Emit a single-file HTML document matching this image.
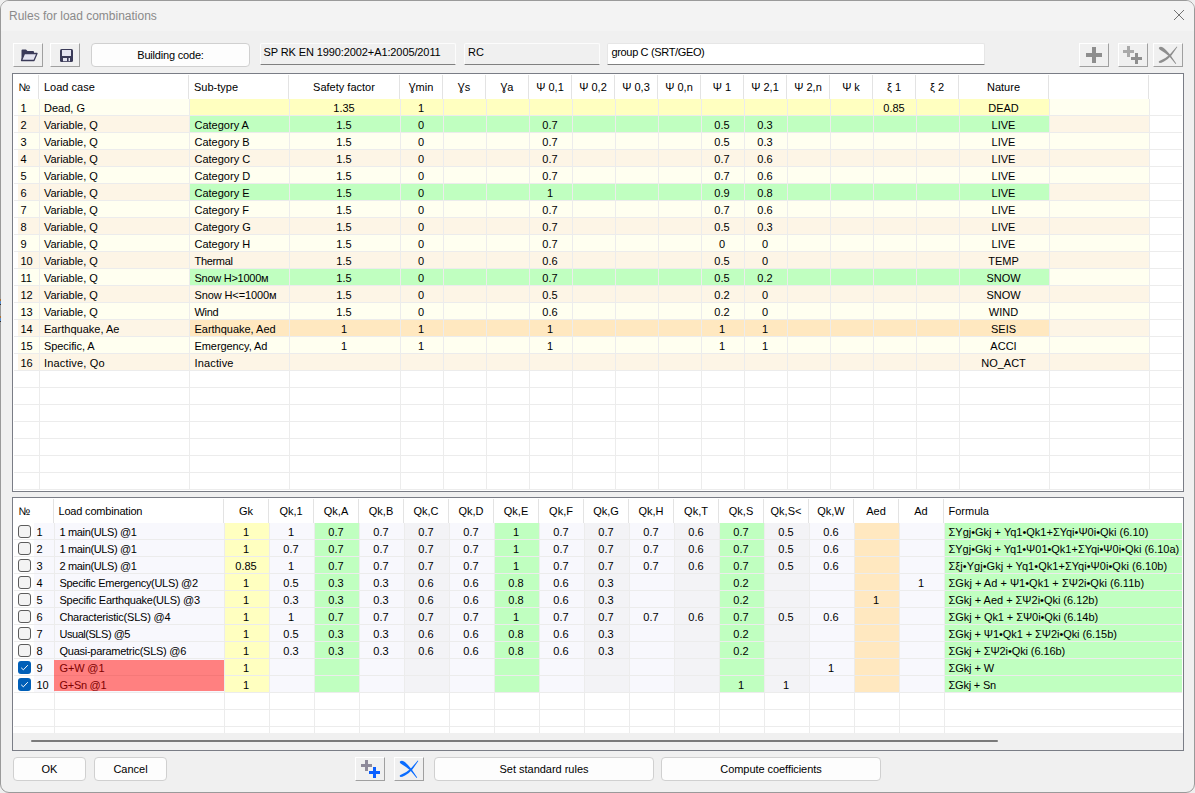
<!DOCTYPE html>
<html><head><meta charset="utf-8"><title>Rules for load combinations</title>
<style>
*{margin:0;padding:0}
html,body{width:1195px;height:793px;overflow:hidden;background:#efefef}
body{position:relative;font-family:"Liberation Sans",sans-serif;font-size:11px;color:#000}
.a{position:absolute}
.t{white-space:pre}
</style></head><body>
<div class="a" style="left:0px;top:0px;width:1195px;height:793px;background:#f0f0f0;border:1px solid #9a9a9a;border-radius:9px;box-sizing:border-box;overflow:hidden"></div>
<div class="a" style="left:1px;top:1px;width:1193px;height:30px;background:#f3f3f3;border-radius:8px 8px 0 0"></div>
<div class="a t" style="left:9px;top:10.24px;font-size:12px;line-height:12px;color:#8a8a8a;letter-spacing:-0.011px">Rules for load combinations</div>
<svg class="a" style="left:1172px;top:8px" width="14" height="14" viewBox="0 0 14 14"><path d="M2 2L12 12M12 2L2 12" stroke="#6a6a6a" stroke-width="0.95"/></svg>
<div class="a" style="left:0px;top:299px;width:1px;height:2px;background:#a8703a;"></div>
<div class="a" style="left:0px;top:301px;width:1px;height:3px;background:#5a8cc8;"></div>
<div class="a" style="left:0px;top:304px;width:1px;height:1px;background:#303030;"></div>
<div class="a" style="left:0px;top:316px;width:1px;height:2px;background:#a8703a;"></div>
<div class="a" style="left:0px;top:318px;width:1px;height:3px;background:#5a8cc8;"></div>
<div class="a" style="left:0px;top:321px;width:1px;height:1px;background:#303030;"></div>
<div class="a" style="left:13px;top:43px;width:30px;height:24px;background:#f0f0f0;border-top:1px solid #fff;border-left:1px solid #fff;border-right:1px solid #a0a0a0;border-bottom:1px solid #a0a0a0;box-sizing:border-box"></div>
<div class="a" style="left:50px;top:43px;width:30px;height:24px;background:#f0f0f0;border-top:1px solid #fff;border-left:1px solid #fff;border-right:1px solid #a0a0a0;border-bottom:1px solid #a0a0a0;box-sizing:border-box"></div>
<svg class="a" style="left:20px;top:48px" width="18" height="14" viewBox="0 0 18 14"><path d="M1.5 2.5 Q1.5 1.5 2.5 1.5 L6 1.5 L7.5 3 L13 3 Q14 3 14 4 L14 5.5 L4.5 5.5 L1.5 12.5 Z" fill="#3a3a58"/><path d="M4.5 5.5 L17 5.5 L14 12.5 L1.5 12.5 Z" fill="#e4e4f0" stroke="#3a3a58" stroke-width="1.3" stroke-linejoin="round"/></svg>
<svg class="a" style="left:60px;top:49px" width="13" height="13" viewBox="0 0 13 13"><rect x="0" y="0" width="13" height="13" rx="1.5" fill="#3a3a58"/><rect x="2" y="1" width="9" height="6" fill="#e4e4f0"/><rect x="3" y="9" width="7" height="3.2" fill="#e4e4f0"/><rect x="7" y="9" width="1.6" height="3.2" fill="#3a3a58"/></svg>
<div class="a" style="left:91px;top:43px;width:159px;height:24px;background:#fdfdfd;border:1px solid #d0d0d0;border-radius:4px;box-sizing:border-box"></div>
<div class="a t" style="left:91px;top:50.19px;font-size:11px;line-height:11px;width:159px;text-align:center;letter-spacing:-0.193px">Building code:</div>
<div class="a" style="left:260px;top:43px;width:196px;height:22px;background:#f0f0f0;border:1px solid #fcfcfc;border-bottom:1px solid #808080;border-radius:2px 2px 1px 1px;box-sizing:border-box"></div>
<div class="a t" style="left:263.5px;top:46.69px;font-size:11px;line-height:11px;letter-spacing:-0.104px">SP RK EN 1990:2002+A1:2005/2011</div>
<div class="a" style="left:464px;top:43px;width:136px;height:22px;background:#f0f0f0;border:1px solid #fcfcfc;border-bottom:1px solid #808080;border-radius:2px 2px 1px 1px;box-sizing:border-box"></div>
<div class="a t" style="left:468px;top:46.69px;font-size:11px;line-height:11px;">RC</div>
<div class="a" style="left:607px;top:43px;width:378px;height:22px;background:#ffffff;border:1px solid #e6e6e6;border-bottom:1px solid #808080;border-radius:2px 2px 1px 1px;box-sizing:border-box"></div>
<div class="a t" style="left:611.5px;top:46.69px;font-size:11px;line-height:11px;letter-spacing:-0.346px">group C (SRT/GEO)</div>
<div class="a" style="left:1079px;top:43px;width:30px;height:24px;background:#f0f0f0;border-top:1px solid #fff;border-left:1px solid #fff;border-right:1px solid #a0a0a0;border-bottom:1px solid #a0a0a0;box-sizing:border-box"></div>
<div class="a" style="left:1118px;top:43px;width:30px;height:24px;background:#f0f0f0;border-top:1px solid #fff;border-left:1px solid #fff;border-right:1px solid #a0a0a0;border-bottom:1px solid #a0a0a0;box-sizing:border-box"></div>
<div class="a" style="left:1153px;top:43px;width:30px;height:24px;background:#f0f0f0;border-top:1px solid #fff;border-left:1px solid #fff;border-right:1px solid #a0a0a0;border-bottom:1px solid #a0a0a0;box-sizing:border-box"></div>
<svg class="a" style="left:1079px;top:43px" width="30" height="24"><rect x="7" y="10" width="16" height="4" fill="#8e8e8e"/><rect x="13" y="4" width="4" height="16" fill="#8e8e8e"/></svg>
<svg class="a" style="left:1118px;top:43px" width="30" height="24"><rect x="5" y="7" width="11" height="3" fill="#a9a9a9"/><rect x="9" y="3" width="3" height="11" fill="#a9a9a9"/><rect x="13" y="14" width="11" height="3" fill="#8e8e8e"/><rect x="17" y="10" width="3" height="11" fill="#8e8e8e"/></svg>
<svg class="a" style="left:1153px;top:43px" width="30" height="24" viewBox="0 0 30 24"><path d="M6.2 4.2 Q8 3.4 10 4.4 Q13 6.5 17.6 12.2 L23.2 20.6 L22.6 21 L16.4 13.6 Q12 9.8 6.6 6.6 Q5.2 5.2 6.2 4.2 Z" fill="#8e8e8e"/><path d="M23.8 3.6 L24.3 4 L18.4 12.6 Q15.8 15.8 11 18.4 Q8 20 6.6 20 Q5.4 19.6 5.8 18.6 Q6.2 17.8 7.4 17.4 Q12.5 15.6 16.6 11.8 Z" fill="#8e8e8e"/></svg>
<div class="a" style="left:12px;top:73px;width:1172px;height:419px;border:1px solid #7a7d86;background:#fff;box-sizing:border-box"></div>
<div class="a" style="left:38px;top:75px;width:1px;height:24px;background:#e3e3e3;"></div>
<div class="a" style="left:188px;top:75px;width:1px;height:24px;background:#e3e3e3;"></div>
<div class="a" style="left:288px;top:75px;width:1px;height:24px;background:#e3e3e3;"></div>
<div class="a" style="left:399px;top:75px;width:1px;height:24px;background:#e3e3e3;"></div>
<div class="a" style="left:442px;top:75px;width:1px;height:24px;background:#e3e3e3;"></div>
<div class="a" style="left:485px;top:75px;width:1px;height:24px;background:#e3e3e3;"></div>
<div class="a" style="left:528px;top:75px;width:1px;height:24px;background:#e3e3e3;"></div>
<div class="a" style="left:571px;top:75px;width:1px;height:24px;background:#e3e3e3;"></div>
<div class="a" style="left:614px;top:75px;width:1px;height:24px;background:#e3e3e3;"></div>
<div class="a" style="left:657px;top:75px;width:1px;height:24px;background:#e3e3e3;"></div>
<div class="a" style="left:700px;top:75px;width:1px;height:24px;background:#e3e3e3;"></div>
<div class="a" style="left:743px;top:75px;width:1px;height:24px;background:#e3e3e3;"></div>
<div class="a" style="left:786px;top:75px;width:1px;height:24px;background:#e3e3e3;"></div>
<div class="a" style="left:829px;top:75px;width:1px;height:24px;background:#e3e3e3;"></div>
<div class="a" style="left:872px;top:75px;width:1px;height:24px;background:#e3e3e3;"></div>
<div class="a" style="left:915px;top:75px;width:1px;height:24px;background:#e3e3e3;"></div>
<div class="a" style="left:958px;top:75px;width:1px;height:24px;background:#e3e3e3;"></div>
<div class="a" style="left:1048px;top:75px;width:1px;height:24px;background:#e3e3e3;"></div>
<div class="a" style="left:1148px;top:75px;width:1px;height:24px;background:#e3e3e3;"></div>
<div class="a t" style="left:18.5px;top:81.69px;font-size:11px;line-height:11px;">№</div>
<div class="a t" style="left:44px;top:81.69px;font-size:11px;line-height:11px;">Load case</div>
<div class="a t" style="left:194px;top:81.69px;font-size:11px;line-height:11px;">Sub-type</div>
<div class="a t" style="left:289px;top:81.69px;font-size:11px;line-height:11px;width:110px;text-align:center;">Safety factor</div>
<div class="a t" style="left:400px;top:81.69px;font-size:11px;line-height:11px;width:42px;text-align:center;">Ɣmin</div>
<div class="a t" style="left:443px;top:81.69px;font-size:11px;line-height:11px;width:42px;text-align:center;">Ɣs</div>
<div class="a t" style="left:486px;top:81.69px;font-size:11px;line-height:11px;width:42px;text-align:center;">Ɣa</div>
<div class="a t" style="left:529px;top:81.69px;font-size:11px;line-height:11px;width:42px;text-align:center;">Ψ 0,1</div>
<div class="a t" style="left:572px;top:81.69px;font-size:11px;line-height:11px;width:42px;text-align:center;">Ψ 0,2</div>
<div class="a t" style="left:615px;top:81.69px;font-size:11px;line-height:11px;width:42px;text-align:center;">Ψ 0,3</div>
<div class="a t" style="left:658px;top:81.69px;font-size:11px;line-height:11px;width:42px;text-align:center;">Ψ 0,n</div>
<div class="a t" style="left:701px;top:81.69px;font-size:11px;line-height:11px;width:42px;text-align:center;">Ψ 1</div>
<div class="a t" style="left:744px;top:81.69px;font-size:11px;line-height:11px;width:42px;text-align:center;">Ψ 2,1</div>
<div class="a t" style="left:787px;top:81.69px;font-size:11px;line-height:11px;width:42px;text-align:center;">Ψ 2,n</div>
<div class="a t" style="left:830px;top:81.69px;font-size:11px;line-height:11px;width:42px;text-align:center;">Ψ k</div>
<div class="a t" style="left:873px;top:81.69px;font-size:11px;line-height:11px;width:42px;text-align:center;">ξ 1</div>
<div class="a t" style="left:916px;top:81.69px;font-size:11px;line-height:11px;width:42px;text-align:center;">ξ 2</div>
<div class="a t" style="left:959px;top:81.69px;font-size:11px;line-height:11px;width:89px;text-align:center;">Nature</div>
<div class="a t" style="left:1049px;top:81.69px;font-size:11px;line-height:11px;width:99px;text-align:center;"></div>
<div class="a" style="left:18px;top:99px;width:21px;height:16px;background:#fffff0;"></div>
<div class="a" style="left:40px;top:99px;width:149px;height:16px;background:#fffff0;"></div>
<div class="a" style="left:190px;top:99px;width:99px;height:16px;background:#ffffc0;"></div>
<div class="a" style="left:290px;top:99px;width:110px;height:16px;background:#ffffc0;"></div>
<div class="a" style="left:401px;top:99px;width:42px;height:16px;background:#ffffc0;"></div>
<div class="a" style="left:444px;top:99px;width:42px;height:16px;background:#ffffc0;"></div>
<div class="a" style="left:487px;top:99px;width:42px;height:16px;background:#ffffc0;"></div>
<div class="a" style="left:530px;top:99px;width:42px;height:16px;background:#ffffc0;"></div>
<div class="a" style="left:573px;top:99px;width:42px;height:16px;background:#ffffc0;"></div>
<div class="a" style="left:616px;top:99px;width:42px;height:16px;background:#ffffc0;"></div>
<div class="a" style="left:659px;top:99px;width:42px;height:16px;background:#ffffc0;"></div>
<div class="a" style="left:702px;top:99px;width:42px;height:16px;background:#ffffc0;"></div>
<div class="a" style="left:745px;top:99px;width:42px;height:16px;background:#ffffc0;"></div>
<div class="a" style="left:788px;top:99px;width:42px;height:16px;background:#ffffc0;"></div>
<div class="a" style="left:831px;top:99px;width:42px;height:16px;background:#ffffc0;"></div>
<div class="a" style="left:874px;top:99px;width:42px;height:16px;background:#ffffc0;"></div>
<div class="a" style="left:917px;top:99px;width:42px;height:16px;background:#ffffc0;"></div>
<div class="a" style="left:960px;top:99px;width:89px;height:16px;background:#ffffc0;"></div>
<div class="a" style="left:1050px;top:99px;width:99px;height:16px;background:#fffff0;"></div>
<div class="a t" style="left:20.5px;top:102.69px;font-size:11px;line-height:11px;">1</div>
<div class="a t" style="left:44px;top:102.69px;font-size:11px;line-height:11px;">Dead, G</div>
<div class="a t" style="left:289px;top:102.69px;font-size:11px;line-height:11px;width:110px;text-align:center;">1.35</div>
<div class="a t" style="left:400px;top:102.69px;font-size:11px;line-height:11px;width:42px;text-align:center;">1</div>
<div class="a t" style="left:873px;top:102.69px;font-size:11px;line-height:11px;width:42px;text-align:center;">0.85</div>
<div class="a t" style="left:959px;top:102.69px;font-size:11px;line-height:11px;width:89px;text-align:center;">DEAD</div>
<div class="a" style="left:18px;top:116px;width:21px;height:16px;background:#fdf5e6;"></div>
<div class="a" style="left:40px;top:116px;width:149px;height:16px;background:#fdf5e6;"></div>
<div class="a" style="left:190px;top:116px;width:99px;height:16px;background:#c0ffc0;"></div>
<div class="a" style="left:290px;top:116px;width:110px;height:16px;background:#c0ffc0;"></div>
<div class="a" style="left:401px;top:116px;width:42px;height:16px;background:#c0ffc0;"></div>
<div class="a" style="left:444px;top:116px;width:42px;height:16px;background:#c0ffc0;"></div>
<div class="a" style="left:487px;top:116px;width:42px;height:16px;background:#c0ffc0;"></div>
<div class="a" style="left:530px;top:116px;width:42px;height:16px;background:#c0ffc0;"></div>
<div class="a" style="left:573px;top:116px;width:42px;height:16px;background:#c0ffc0;"></div>
<div class="a" style="left:616px;top:116px;width:42px;height:16px;background:#c0ffc0;"></div>
<div class="a" style="left:659px;top:116px;width:42px;height:16px;background:#c0ffc0;"></div>
<div class="a" style="left:702px;top:116px;width:42px;height:16px;background:#c0ffc0;"></div>
<div class="a" style="left:745px;top:116px;width:42px;height:16px;background:#c0ffc0;"></div>
<div class="a" style="left:788px;top:116px;width:42px;height:16px;background:#c0ffc0;"></div>
<div class="a" style="left:831px;top:116px;width:42px;height:16px;background:#c0ffc0;"></div>
<div class="a" style="left:874px;top:116px;width:42px;height:16px;background:#c0ffc0;"></div>
<div class="a" style="left:917px;top:116px;width:42px;height:16px;background:#c0ffc0;"></div>
<div class="a" style="left:960px;top:116px;width:89px;height:16px;background:#c0ffc0;"></div>
<div class="a" style="left:1050px;top:116px;width:99px;height:16px;background:#fdf5e6;"></div>
<div class="a t" style="left:20.5px;top:119.69px;font-size:11px;line-height:11px;">2</div>
<div class="a t" style="left:44px;top:119.69px;font-size:11px;line-height:11px;letter-spacing:-0.052px">Variable, Q</div>
<div class="a t" style="left:194.5px;top:119.69px;font-size:11px;line-height:11px;">Category A</div>
<div class="a t" style="left:289px;top:119.69px;font-size:11px;line-height:11px;width:110px;text-align:center;">1.5</div>
<div class="a t" style="left:400px;top:119.69px;font-size:11px;line-height:11px;width:42px;text-align:center;">0</div>
<div class="a t" style="left:529px;top:119.69px;font-size:11px;line-height:11px;width:42px;text-align:center;">0.7</div>
<div class="a t" style="left:701px;top:119.69px;font-size:11px;line-height:11px;width:42px;text-align:center;">0.5</div>
<div class="a t" style="left:744px;top:119.69px;font-size:11px;line-height:11px;width:42px;text-align:center;">0.3</div>
<div class="a t" style="left:959px;top:119.69px;font-size:11px;line-height:11px;width:89px;text-align:center;">LIVE</div>
<div class="a" style="left:18px;top:133px;width:21px;height:16px;background:#fffff0;"></div>
<div class="a" style="left:40px;top:133px;width:149px;height:16px;background:#fffff0;"></div>
<div class="a" style="left:190px;top:133px;width:99px;height:16px;background:#fffff0;"></div>
<div class="a" style="left:290px;top:133px;width:110px;height:16px;background:#fffff0;"></div>
<div class="a" style="left:401px;top:133px;width:42px;height:16px;background:#fffff0;"></div>
<div class="a" style="left:444px;top:133px;width:42px;height:16px;background:#fffff0;"></div>
<div class="a" style="left:487px;top:133px;width:42px;height:16px;background:#fffff0;"></div>
<div class="a" style="left:530px;top:133px;width:42px;height:16px;background:#fffff0;"></div>
<div class="a" style="left:573px;top:133px;width:42px;height:16px;background:#fffff0;"></div>
<div class="a" style="left:616px;top:133px;width:42px;height:16px;background:#fffff0;"></div>
<div class="a" style="left:659px;top:133px;width:42px;height:16px;background:#fffff0;"></div>
<div class="a" style="left:702px;top:133px;width:42px;height:16px;background:#fffff0;"></div>
<div class="a" style="left:745px;top:133px;width:42px;height:16px;background:#fffff0;"></div>
<div class="a" style="left:788px;top:133px;width:42px;height:16px;background:#fffff0;"></div>
<div class="a" style="left:831px;top:133px;width:42px;height:16px;background:#fffff0;"></div>
<div class="a" style="left:874px;top:133px;width:42px;height:16px;background:#fffff0;"></div>
<div class="a" style="left:917px;top:133px;width:42px;height:16px;background:#fffff0;"></div>
<div class="a" style="left:960px;top:133px;width:89px;height:16px;background:#fffff0;"></div>
<div class="a" style="left:1050px;top:133px;width:99px;height:16px;background:#fffff0;"></div>
<div class="a t" style="left:20.5px;top:136.69px;font-size:11px;line-height:11px;">3</div>
<div class="a t" style="left:44px;top:136.69px;font-size:11px;line-height:11px;letter-spacing:-0.052px">Variable, Q</div>
<div class="a t" style="left:194.5px;top:136.69px;font-size:11px;line-height:11px;">Category B</div>
<div class="a t" style="left:289px;top:136.69px;font-size:11px;line-height:11px;width:110px;text-align:center;">1.5</div>
<div class="a t" style="left:400px;top:136.69px;font-size:11px;line-height:11px;width:42px;text-align:center;">0</div>
<div class="a t" style="left:529px;top:136.69px;font-size:11px;line-height:11px;width:42px;text-align:center;">0.7</div>
<div class="a t" style="left:701px;top:136.69px;font-size:11px;line-height:11px;width:42px;text-align:center;">0.5</div>
<div class="a t" style="left:744px;top:136.69px;font-size:11px;line-height:11px;width:42px;text-align:center;">0.3</div>
<div class="a t" style="left:959px;top:136.69px;font-size:11px;line-height:11px;width:89px;text-align:center;">LIVE</div>
<div class="a" style="left:18px;top:150px;width:21px;height:16px;background:#fdf5e6;"></div>
<div class="a" style="left:40px;top:150px;width:149px;height:16px;background:#fdf5e6;"></div>
<div class="a" style="left:190px;top:150px;width:99px;height:16px;background:#fdf5e6;"></div>
<div class="a" style="left:290px;top:150px;width:110px;height:16px;background:#fdf5e6;"></div>
<div class="a" style="left:401px;top:150px;width:42px;height:16px;background:#fdf5e6;"></div>
<div class="a" style="left:444px;top:150px;width:42px;height:16px;background:#fdf5e6;"></div>
<div class="a" style="left:487px;top:150px;width:42px;height:16px;background:#fdf5e6;"></div>
<div class="a" style="left:530px;top:150px;width:42px;height:16px;background:#fdf5e6;"></div>
<div class="a" style="left:573px;top:150px;width:42px;height:16px;background:#fdf5e6;"></div>
<div class="a" style="left:616px;top:150px;width:42px;height:16px;background:#fdf5e6;"></div>
<div class="a" style="left:659px;top:150px;width:42px;height:16px;background:#fdf5e6;"></div>
<div class="a" style="left:702px;top:150px;width:42px;height:16px;background:#fdf5e6;"></div>
<div class="a" style="left:745px;top:150px;width:42px;height:16px;background:#fdf5e6;"></div>
<div class="a" style="left:788px;top:150px;width:42px;height:16px;background:#fdf5e6;"></div>
<div class="a" style="left:831px;top:150px;width:42px;height:16px;background:#fdf5e6;"></div>
<div class="a" style="left:874px;top:150px;width:42px;height:16px;background:#fdf5e6;"></div>
<div class="a" style="left:917px;top:150px;width:42px;height:16px;background:#fdf5e6;"></div>
<div class="a" style="left:960px;top:150px;width:89px;height:16px;background:#fdf5e6;"></div>
<div class="a" style="left:1050px;top:150px;width:99px;height:16px;background:#fdf5e6;"></div>
<div class="a t" style="left:20.5px;top:153.69px;font-size:11px;line-height:11px;">4</div>
<div class="a t" style="left:44px;top:153.69px;font-size:11px;line-height:11px;letter-spacing:-0.052px">Variable, Q</div>
<div class="a t" style="left:194.5px;top:153.69px;font-size:11px;line-height:11px;">Category C</div>
<div class="a t" style="left:289px;top:153.69px;font-size:11px;line-height:11px;width:110px;text-align:center;">1.5</div>
<div class="a t" style="left:400px;top:153.69px;font-size:11px;line-height:11px;width:42px;text-align:center;">0</div>
<div class="a t" style="left:529px;top:153.69px;font-size:11px;line-height:11px;width:42px;text-align:center;">0.7</div>
<div class="a t" style="left:701px;top:153.69px;font-size:11px;line-height:11px;width:42px;text-align:center;">0.7</div>
<div class="a t" style="left:744px;top:153.69px;font-size:11px;line-height:11px;width:42px;text-align:center;">0.6</div>
<div class="a t" style="left:959px;top:153.69px;font-size:11px;line-height:11px;width:89px;text-align:center;">LIVE</div>
<div class="a" style="left:18px;top:167px;width:21px;height:16px;background:#fffff0;"></div>
<div class="a" style="left:40px;top:167px;width:149px;height:16px;background:#fffff0;"></div>
<div class="a" style="left:190px;top:167px;width:99px;height:16px;background:#fffff0;"></div>
<div class="a" style="left:290px;top:167px;width:110px;height:16px;background:#fffff0;"></div>
<div class="a" style="left:401px;top:167px;width:42px;height:16px;background:#fffff0;"></div>
<div class="a" style="left:444px;top:167px;width:42px;height:16px;background:#fffff0;"></div>
<div class="a" style="left:487px;top:167px;width:42px;height:16px;background:#fffff0;"></div>
<div class="a" style="left:530px;top:167px;width:42px;height:16px;background:#fffff0;"></div>
<div class="a" style="left:573px;top:167px;width:42px;height:16px;background:#fffff0;"></div>
<div class="a" style="left:616px;top:167px;width:42px;height:16px;background:#fffff0;"></div>
<div class="a" style="left:659px;top:167px;width:42px;height:16px;background:#fffff0;"></div>
<div class="a" style="left:702px;top:167px;width:42px;height:16px;background:#fffff0;"></div>
<div class="a" style="left:745px;top:167px;width:42px;height:16px;background:#fffff0;"></div>
<div class="a" style="left:788px;top:167px;width:42px;height:16px;background:#fffff0;"></div>
<div class="a" style="left:831px;top:167px;width:42px;height:16px;background:#fffff0;"></div>
<div class="a" style="left:874px;top:167px;width:42px;height:16px;background:#fffff0;"></div>
<div class="a" style="left:917px;top:167px;width:42px;height:16px;background:#fffff0;"></div>
<div class="a" style="left:960px;top:167px;width:89px;height:16px;background:#fffff0;"></div>
<div class="a" style="left:1050px;top:167px;width:99px;height:16px;background:#fffff0;"></div>
<div class="a t" style="left:20.5px;top:170.69px;font-size:11px;line-height:11px;">5</div>
<div class="a t" style="left:44px;top:170.69px;font-size:11px;line-height:11px;letter-spacing:-0.052px">Variable, Q</div>
<div class="a t" style="left:194.5px;top:170.69px;font-size:11px;line-height:11px;">Category D</div>
<div class="a t" style="left:289px;top:170.69px;font-size:11px;line-height:11px;width:110px;text-align:center;">1.5</div>
<div class="a t" style="left:400px;top:170.69px;font-size:11px;line-height:11px;width:42px;text-align:center;">0</div>
<div class="a t" style="left:529px;top:170.69px;font-size:11px;line-height:11px;width:42px;text-align:center;">0.7</div>
<div class="a t" style="left:701px;top:170.69px;font-size:11px;line-height:11px;width:42px;text-align:center;">0.7</div>
<div class="a t" style="left:744px;top:170.69px;font-size:11px;line-height:11px;width:42px;text-align:center;">0.6</div>
<div class="a t" style="left:959px;top:170.69px;font-size:11px;line-height:11px;width:89px;text-align:center;">LIVE</div>
<div class="a" style="left:18px;top:184px;width:21px;height:16px;background:#fdf5e6;"></div>
<div class="a" style="left:40px;top:184px;width:149px;height:16px;background:#fdf5e6;"></div>
<div class="a" style="left:190px;top:184px;width:99px;height:16px;background:#c0ffc0;"></div>
<div class="a" style="left:290px;top:184px;width:110px;height:16px;background:#c0ffc0;"></div>
<div class="a" style="left:401px;top:184px;width:42px;height:16px;background:#c0ffc0;"></div>
<div class="a" style="left:444px;top:184px;width:42px;height:16px;background:#c0ffc0;"></div>
<div class="a" style="left:487px;top:184px;width:42px;height:16px;background:#c0ffc0;"></div>
<div class="a" style="left:530px;top:184px;width:42px;height:16px;background:#c0ffc0;"></div>
<div class="a" style="left:573px;top:184px;width:42px;height:16px;background:#c0ffc0;"></div>
<div class="a" style="left:616px;top:184px;width:42px;height:16px;background:#c0ffc0;"></div>
<div class="a" style="left:659px;top:184px;width:42px;height:16px;background:#c0ffc0;"></div>
<div class="a" style="left:702px;top:184px;width:42px;height:16px;background:#c0ffc0;"></div>
<div class="a" style="left:745px;top:184px;width:42px;height:16px;background:#c0ffc0;"></div>
<div class="a" style="left:788px;top:184px;width:42px;height:16px;background:#c0ffc0;"></div>
<div class="a" style="left:831px;top:184px;width:42px;height:16px;background:#c0ffc0;"></div>
<div class="a" style="left:874px;top:184px;width:42px;height:16px;background:#c0ffc0;"></div>
<div class="a" style="left:917px;top:184px;width:42px;height:16px;background:#c0ffc0;"></div>
<div class="a" style="left:960px;top:184px;width:89px;height:16px;background:#c0ffc0;"></div>
<div class="a" style="left:1050px;top:184px;width:99px;height:16px;background:#fdf5e6;"></div>
<div class="a t" style="left:20.5px;top:187.69px;font-size:11px;line-height:11px;">6</div>
<div class="a t" style="left:44px;top:187.69px;font-size:11px;line-height:11px;letter-spacing:-0.052px">Variable, Q</div>
<div class="a t" style="left:194.5px;top:187.69px;font-size:11px;line-height:11px;">Category E</div>
<div class="a t" style="left:289px;top:187.69px;font-size:11px;line-height:11px;width:110px;text-align:center;">1.5</div>
<div class="a t" style="left:400px;top:187.69px;font-size:11px;line-height:11px;width:42px;text-align:center;">0</div>
<div class="a t" style="left:529px;top:187.69px;font-size:11px;line-height:11px;width:42px;text-align:center;">1</div>
<div class="a t" style="left:701px;top:187.69px;font-size:11px;line-height:11px;width:42px;text-align:center;">0.9</div>
<div class="a t" style="left:744px;top:187.69px;font-size:11px;line-height:11px;width:42px;text-align:center;">0.8</div>
<div class="a t" style="left:959px;top:187.69px;font-size:11px;line-height:11px;width:89px;text-align:center;">LIVE</div>
<div class="a" style="left:18px;top:201px;width:21px;height:16px;background:#fffff0;"></div>
<div class="a" style="left:40px;top:201px;width:149px;height:16px;background:#fffff0;"></div>
<div class="a" style="left:190px;top:201px;width:99px;height:16px;background:#fffff0;"></div>
<div class="a" style="left:290px;top:201px;width:110px;height:16px;background:#fffff0;"></div>
<div class="a" style="left:401px;top:201px;width:42px;height:16px;background:#fffff0;"></div>
<div class="a" style="left:444px;top:201px;width:42px;height:16px;background:#fffff0;"></div>
<div class="a" style="left:487px;top:201px;width:42px;height:16px;background:#fffff0;"></div>
<div class="a" style="left:530px;top:201px;width:42px;height:16px;background:#fffff0;"></div>
<div class="a" style="left:573px;top:201px;width:42px;height:16px;background:#fffff0;"></div>
<div class="a" style="left:616px;top:201px;width:42px;height:16px;background:#fffff0;"></div>
<div class="a" style="left:659px;top:201px;width:42px;height:16px;background:#fffff0;"></div>
<div class="a" style="left:702px;top:201px;width:42px;height:16px;background:#fffff0;"></div>
<div class="a" style="left:745px;top:201px;width:42px;height:16px;background:#fffff0;"></div>
<div class="a" style="left:788px;top:201px;width:42px;height:16px;background:#fffff0;"></div>
<div class="a" style="left:831px;top:201px;width:42px;height:16px;background:#fffff0;"></div>
<div class="a" style="left:874px;top:201px;width:42px;height:16px;background:#fffff0;"></div>
<div class="a" style="left:917px;top:201px;width:42px;height:16px;background:#fffff0;"></div>
<div class="a" style="left:960px;top:201px;width:89px;height:16px;background:#fffff0;"></div>
<div class="a" style="left:1050px;top:201px;width:99px;height:16px;background:#fffff0;"></div>
<div class="a t" style="left:20.5px;top:204.69px;font-size:11px;line-height:11px;">7</div>
<div class="a t" style="left:44px;top:204.69px;font-size:11px;line-height:11px;letter-spacing:-0.052px">Variable, Q</div>
<div class="a t" style="left:194.5px;top:204.69px;font-size:11px;line-height:11px;">Category F</div>
<div class="a t" style="left:289px;top:204.69px;font-size:11px;line-height:11px;width:110px;text-align:center;">1.5</div>
<div class="a t" style="left:400px;top:204.69px;font-size:11px;line-height:11px;width:42px;text-align:center;">0</div>
<div class="a t" style="left:529px;top:204.69px;font-size:11px;line-height:11px;width:42px;text-align:center;">0.7</div>
<div class="a t" style="left:701px;top:204.69px;font-size:11px;line-height:11px;width:42px;text-align:center;">0.7</div>
<div class="a t" style="left:744px;top:204.69px;font-size:11px;line-height:11px;width:42px;text-align:center;">0.6</div>
<div class="a t" style="left:959px;top:204.69px;font-size:11px;line-height:11px;width:89px;text-align:center;">LIVE</div>
<div class="a" style="left:18px;top:218px;width:21px;height:16px;background:#fdf5e6;"></div>
<div class="a" style="left:40px;top:218px;width:149px;height:16px;background:#fdf5e6;"></div>
<div class="a" style="left:190px;top:218px;width:99px;height:16px;background:#fdf5e6;"></div>
<div class="a" style="left:290px;top:218px;width:110px;height:16px;background:#fdf5e6;"></div>
<div class="a" style="left:401px;top:218px;width:42px;height:16px;background:#fdf5e6;"></div>
<div class="a" style="left:444px;top:218px;width:42px;height:16px;background:#fdf5e6;"></div>
<div class="a" style="left:487px;top:218px;width:42px;height:16px;background:#fdf5e6;"></div>
<div class="a" style="left:530px;top:218px;width:42px;height:16px;background:#fdf5e6;"></div>
<div class="a" style="left:573px;top:218px;width:42px;height:16px;background:#fdf5e6;"></div>
<div class="a" style="left:616px;top:218px;width:42px;height:16px;background:#fdf5e6;"></div>
<div class="a" style="left:659px;top:218px;width:42px;height:16px;background:#fdf5e6;"></div>
<div class="a" style="left:702px;top:218px;width:42px;height:16px;background:#fdf5e6;"></div>
<div class="a" style="left:745px;top:218px;width:42px;height:16px;background:#fdf5e6;"></div>
<div class="a" style="left:788px;top:218px;width:42px;height:16px;background:#fdf5e6;"></div>
<div class="a" style="left:831px;top:218px;width:42px;height:16px;background:#fdf5e6;"></div>
<div class="a" style="left:874px;top:218px;width:42px;height:16px;background:#fdf5e6;"></div>
<div class="a" style="left:917px;top:218px;width:42px;height:16px;background:#fdf5e6;"></div>
<div class="a" style="left:960px;top:218px;width:89px;height:16px;background:#fdf5e6;"></div>
<div class="a" style="left:1050px;top:218px;width:99px;height:16px;background:#fdf5e6;"></div>
<div class="a t" style="left:20.5px;top:221.69px;font-size:11px;line-height:11px;">8</div>
<div class="a t" style="left:44px;top:221.69px;font-size:11px;line-height:11px;letter-spacing:-0.052px">Variable, Q</div>
<div class="a t" style="left:194.5px;top:221.69px;font-size:11px;line-height:11px;">Category G</div>
<div class="a t" style="left:289px;top:221.69px;font-size:11px;line-height:11px;width:110px;text-align:center;">1.5</div>
<div class="a t" style="left:400px;top:221.69px;font-size:11px;line-height:11px;width:42px;text-align:center;">0</div>
<div class="a t" style="left:529px;top:221.69px;font-size:11px;line-height:11px;width:42px;text-align:center;">0.7</div>
<div class="a t" style="left:701px;top:221.69px;font-size:11px;line-height:11px;width:42px;text-align:center;">0.5</div>
<div class="a t" style="left:744px;top:221.69px;font-size:11px;line-height:11px;width:42px;text-align:center;">0.3</div>
<div class="a t" style="left:959px;top:221.69px;font-size:11px;line-height:11px;width:89px;text-align:center;">LIVE</div>
<div class="a" style="left:18px;top:235px;width:21px;height:16px;background:#fffff0;"></div>
<div class="a" style="left:40px;top:235px;width:149px;height:16px;background:#fffff0;"></div>
<div class="a" style="left:190px;top:235px;width:99px;height:16px;background:#fffff0;"></div>
<div class="a" style="left:290px;top:235px;width:110px;height:16px;background:#fffff0;"></div>
<div class="a" style="left:401px;top:235px;width:42px;height:16px;background:#fffff0;"></div>
<div class="a" style="left:444px;top:235px;width:42px;height:16px;background:#fffff0;"></div>
<div class="a" style="left:487px;top:235px;width:42px;height:16px;background:#fffff0;"></div>
<div class="a" style="left:530px;top:235px;width:42px;height:16px;background:#fffff0;"></div>
<div class="a" style="left:573px;top:235px;width:42px;height:16px;background:#fffff0;"></div>
<div class="a" style="left:616px;top:235px;width:42px;height:16px;background:#fffff0;"></div>
<div class="a" style="left:659px;top:235px;width:42px;height:16px;background:#fffff0;"></div>
<div class="a" style="left:702px;top:235px;width:42px;height:16px;background:#fffff0;"></div>
<div class="a" style="left:745px;top:235px;width:42px;height:16px;background:#fffff0;"></div>
<div class="a" style="left:788px;top:235px;width:42px;height:16px;background:#fffff0;"></div>
<div class="a" style="left:831px;top:235px;width:42px;height:16px;background:#fffff0;"></div>
<div class="a" style="left:874px;top:235px;width:42px;height:16px;background:#fffff0;"></div>
<div class="a" style="left:917px;top:235px;width:42px;height:16px;background:#fffff0;"></div>
<div class="a" style="left:960px;top:235px;width:89px;height:16px;background:#fffff0;"></div>
<div class="a" style="left:1050px;top:235px;width:99px;height:16px;background:#fffff0;"></div>
<div class="a t" style="left:20.5px;top:238.69px;font-size:11px;line-height:11px;">9</div>
<div class="a t" style="left:44px;top:238.69px;font-size:11px;line-height:11px;letter-spacing:-0.052px">Variable, Q</div>
<div class="a t" style="left:194.5px;top:238.69px;font-size:11px;line-height:11px;">Category H</div>
<div class="a t" style="left:289px;top:238.69px;font-size:11px;line-height:11px;width:110px;text-align:center;">1.5</div>
<div class="a t" style="left:400px;top:238.69px;font-size:11px;line-height:11px;width:42px;text-align:center;">0</div>
<div class="a t" style="left:529px;top:238.69px;font-size:11px;line-height:11px;width:42px;text-align:center;">0.7</div>
<div class="a t" style="left:701px;top:238.69px;font-size:11px;line-height:11px;width:42px;text-align:center;">0</div>
<div class="a t" style="left:744px;top:238.69px;font-size:11px;line-height:11px;width:42px;text-align:center;">0</div>
<div class="a t" style="left:959px;top:238.69px;font-size:11px;line-height:11px;width:89px;text-align:center;">LIVE</div>
<div class="a" style="left:18px;top:252px;width:21px;height:16px;background:#fdf5e6;"></div>
<div class="a" style="left:40px;top:252px;width:149px;height:16px;background:#fdf5e6;"></div>
<div class="a" style="left:190px;top:252px;width:99px;height:16px;background:#fdf5e6;"></div>
<div class="a" style="left:290px;top:252px;width:110px;height:16px;background:#fdf5e6;"></div>
<div class="a" style="left:401px;top:252px;width:42px;height:16px;background:#fdf5e6;"></div>
<div class="a" style="left:444px;top:252px;width:42px;height:16px;background:#fdf5e6;"></div>
<div class="a" style="left:487px;top:252px;width:42px;height:16px;background:#fdf5e6;"></div>
<div class="a" style="left:530px;top:252px;width:42px;height:16px;background:#fdf5e6;"></div>
<div class="a" style="left:573px;top:252px;width:42px;height:16px;background:#fdf5e6;"></div>
<div class="a" style="left:616px;top:252px;width:42px;height:16px;background:#fdf5e6;"></div>
<div class="a" style="left:659px;top:252px;width:42px;height:16px;background:#fdf5e6;"></div>
<div class="a" style="left:702px;top:252px;width:42px;height:16px;background:#fdf5e6;"></div>
<div class="a" style="left:745px;top:252px;width:42px;height:16px;background:#fdf5e6;"></div>
<div class="a" style="left:788px;top:252px;width:42px;height:16px;background:#fdf5e6;"></div>
<div class="a" style="left:831px;top:252px;width:42px;height:16px;background:#fdf5e6;"></div>
<div class="a" style="left:874px;top:252px;width:42px;height:16px;background:#fdf5e6;"></div>
<div class="a" style="left:917px;top:252px;width:42px;height:16px;background:#fdf5e6;"></div>
<div class="a" style="left:960px;top:252px;width:89px;height:16px;background:#fdf5e6;"></div>
<div class="a" style="left:1050px;top:252px;width:99px;height:16px;background:#fdf5e6;"></div>
<div class="a t" style="left:20.5px;top:255.69px;font-size:11px;line-height:11px;">10</div>
<div class="a t" style="left:44px;top:255.69px;font-size:11px;line-height:11px;letter-spacing:-0.052px">Variable, Q</div>
<div class="a t" style="left:194.5px;top:255.69px;font-size:11px;line-height:11px;letter-spacing:-0.324px">Thermal</div>
<div class="a t" style="left:289px;top:255.69px;font-size:11px;line-height:11px;width:110px;text-align:center;">1.5</div>
<div class="a t" style="left:400px;top:255.69px;font-size:11px;line-height:11px;width:42px;text-align:center;">0</div>
<div class="a t" style="left:529px;top:255.69px;font-size:11px;line-height:11px;width:42px;text-align:center;">0.6</div>
<div class="a t" style="left:701px;top:255.69px;font-size:11px;line-height:11px;width:42px;text-align:center;">0.5</div>
<div class="a t" style="left:744px;top:255.69px;font-size:11px;line-height:11px;width:42px;text-align:center;">0</div>
<div class="a t" style="left:959px;top:255.69px;font-size:11px;line-height:11px;width:89px;text-align:center;">TEMP</div>
<div class="a" style="left:18px;top:269px;width:21px;height:16px;background:#fffff0;"></div>
<div class="a" style="left:40px;top:269px;width:149px;height:16px;background:#fffff0;"></div>
<div class="a" style="left:190px;top:269px;width:99px;height:16px;background:#c0ffc0;"></div>
<div class="a" style="left:290px;top:269px;width:110px;height:16px;background:#c0ffc0;"></div>
<div class="a" style="left:401px;top:269px;width:42px;height:16px;background:#c0ffc0;"></div>
<div class="a" style="left:444px;top:269px;width:42px;height:16px;background:#c0ffc0;"></div>
<div class="a" style="left:487px;top:269px;width:42px;height:16px;background:#c0ffc0;"></div>
<div class="a" style="left:530px;top:269px;width:42px;height:16px;background:#c0ffc0;"></div>
<div class="a" style="left:573px;top:269px;width:42px;height:16px;background:#c0ffc0;"></div>
<div class="a" style="left:616px;top:269px;width:42px;height:16px;background:#c0ffc0;"></div>
<div class="a" style="left:659px;top:269px;width:42px;height:16px;background:#c0ffc0;"></div>
<div class="a" style="left:702px;top:269px;width:42px;height:16px;background:#c0ffc0;"></div>
<div class="a" style="left:745px;top:269px;width:42px;height:16px;background:#c0ffc0;"></div>
<div class="a" style="left:788px;top:269px;width:42px;height:16px;background:#c0ffc0;"></div>
<div class="a" style="left:831px;top:269px;width:42px;height:16px;background:#c0ffc0;"></div>
<div class="a" style="left:874px;top:269px;width:42px;height:16px;background:#c0ffc0;"></div>
<div class="a" style="left:917px;top:269px;width:42px;height:16px;background:#c0ffc0;"></div>
<div class="a" style="left:960px;top:269px;width:89px;height:16px;background:#c0ffc0;"></div>
<div class="a" style="left:1050px;top:269px;width:99px;height:16px;background:#fffff0;"></div>
<div class="a t" style="left:20.5px;top:272.69px;font-size:11px;line-height:11px;">11</div>
<div class="a t" style="left:44px;top:272.69px;font-size:11px;line-height:11px;letter-spacing:-0.052px">Variable, Q</div>
<div class="a t" style="left:194.5px;top:272.69px;font-size:11px;line-height:11px;letter-spacing:-0.262px">Snow H&gt;1000м</div>
<div class="a t" style="left:289px;top:272.69px;font-size:11px;line-height:11px;width:110px;text-align:center;">1.5</div>
<div class="a t" style="left:400px;top:272.69px;font-size:11px;line-height:11px;width:42px;text-align:center;">0</div>
<div class="a t" style="left:529px;top:272.69px;font-size:11px;line-height:11px;width:42px;text-align:center;">0.7</div>
<div class="a t" style="left:701px;top:272.69px;font-size:11px;line-height:11px;width:42px;text-align:center;">0.5</div>
<div class="a t" style="left:744px;top:272.69px;font-size:11px;line-height:11px;width:42px;text-align:center;">0.2</div>
<div class="a t" style="left:959px;top:272.69px;font-size:11px;line-height:11px;width:89px;text-align:center;">SNOW</div>
<div class="a" style="left:18px;top:286px;width:21px;height:16px;background:#fdf5e6;"></div>
<div class="a" style="left:40px;top:286px;width:149px;height:16px;background:#fdf5e6;"></div>
<div class="a" style="left:190px;top:286px;width:99px;height:16px;background:#fdf5e6;"></div>
<div class="a" style="left:290px;top:286px;width:110px;height:16px;background:#fdf5e6;"></div>
<div class="a" style="left:401px;top:286px;width:42px;height:16px;background:#fdf5e6;"></div>
<div class="a" style="left:444px;top:286px;width:42px;height:16px;background:#fdf5e6;"></div>
<div class="a" style="left:487px;top:286px;width:42px;height:16px;background:#fdf5e6;"></div>
<div class="a" style="left:530px;top:286px;width:42px;height:16px;background:#fdf5e6;"></div>
<div class="a" style="left:573px;top:286px;width:42px;height:16px;background:#fdf5e6;"></div>
<div class="a" style="left:616px;top:286px;width:42px;height:16px;background:#fdf5e6;"></div>
<div class="a" style="left:659px;top:286px;width:42px;height:16px;background:#fdf5e6;"></div>
<div class="a" style="left:702px;top:286px;width:42px;height:16px;background:#fdf5e6;"></div>
<div class="a" style="left:745px;top:286px;width:42px;height:16px;background:#fdf5e6;"></div>
<div class="a" style="left:788px;top:286px;width:42px;height:16px;background:#fdf5e6;"></div>
<div class="a" style="left:831px;top:286px;width:42px;height:16px;background:#fdf5e6;"></div>
<div class="a" style="left:874px;top:286px;width:42px;height:16px;background:#fdf5e6;"></div>
<div class="a" style="left:917px;top:286px;width:42px;height:16px;background:#fdf5e6;"></div>
<div class="a" style="left:960px;top:286px;width:89px;height:16px;background:#fdf5e6;"></div>
<div class="a" style="left:1050px;top:286px;width:99px;height:16px;background:#fdf5e6;"></div>
<div class="a t" style="left:20.5px;top:289.69px;font-size:11px;line-height:11px;">12</div>
<div class="a t" style="left:44px;top:289.69px;font-size:11px;line-height:11px;letter-spacing:-0.052px">Variable, Q</div>
<div class="a t" style="left:194.5px;top:289.69px;font-size:11px;line-height:11px;letter-spacing:-0.109px">Snow H&lt;=1000м</div>
<div class="a t" style="left:289px;top:289.69px;font-size:11px;line-height:11px;width:110px;text-align:center;">1.5</div>
<div class="a t" style="left:400px;top:289.69px;font-size:11px;line-height:11px;width:42px;text-align:center;">0</div>
<div class="a t" style="left:529px;top:289.69px;font-size:11px;line-height:11px;width:42px;text-align:center;">0.5</div>
<div class="a t" style="left:701px;top:289.69px;font-size:11px;line-height:11px;width:42px;text-align:center;">0.2</div>
<div class="a t" style="left:744px;top:289.69px;font-size:11px;line-height:11px;width:42px;text-align:center;">0</div>
<div class="a t" style="left:959px;top:289.69px;font-size:11px;line-height:11px;width:89px;text-align:center;">SNOW</div>
<div class="a" style="left:18px;top:303px;width:21px;height:16px;background:#fffff0;"></div>
<div class="a" style="left:40px;top:303px;width:149px;height:16px;background:#fffff0;"></div>
<div class="a" style="left:190px;top:303px;width:99px;height:16px;background:#fffff0;"></div>
<div class="a" style="left:290px;top:303px;width:110px;height:16px;background:#fffff0;"></div>
<div class="a" style="left:401px;top:303px;width:42px;height:16px;background:#fffff0;"></div>
<div class="a" style="left:444px;top:303px;width:42px;height:16px;background:#fffff0;"></div>
<div class="a" style="left:487px;top:303px;width:42px;height:16px;background:#fffff0;"></div>
<div class="a" style="left:530px;top:303px;width:42px;height:16px;background:#fffff0;"></div>
<div class="a" style="left:573px;top:303px;width:42px;height:16px;background:#fffff0;"></div>
<div class="a" style="left:616px;top:303px;width:42px;height:16px;background:#fffff0;"></div>
<div class="a" style="left:659px;top:303px;width:42px;height:16px;background:#fffff0;"></div>
<div class="a" style="left:702px;top:303px;width:42px;height:16px;background:#fffff0;"></div>
<div class="a" style="left:745px;top:303px;width:42px;height:16px;background:#fffff0;"></div>
<div class="a" style="left:788px;top:303px;width:42px;height:16px;background:#fffff0;"></div>
<div class="a" style="left:831px;top:303px;width:42px;height:16px;background:#fffff0;"></div>
<div class="a" style="left:874px;top:303px;width:42px;height:16px;background:#fffff0;"></div>
<div class="a" style="left:917px;top:303px;width:42px;height:16px;background:#fffff0;"></div>
<div class="a" style="left:960px;top:303px;width:89px;height:16px;background:#fffff0;"></div>
<div class="a" style="left:1050px;top:303px;width:99px;height:16px;background:#fffff0;"></div>
<div class="a t" style="left:20.5px;top:306.69px;font-size:11px;line-height:11px;">13</div>
<div class="a t" style="left:44px;top:306.69px;font-size:11px;line-height:11px;letter-spacing:-0.052px">Variable, Q</div>
<div class="a t" style="left:194.5px;top:306.69px;font-size:11px;line-height:11px;letter-spacing:-0.321px">Wind</div>
<div class="a t" style="left:289px;top:306.69px;font-size:11px;line-height:11px;width:110px;text-align:center;">1.5</div>
<div class="a t" style="left:400px;top:306.69px;font-size:11px;line-height:11px;width:42px;text-align:center;">0</div>
<div class="a t" style="left:529px;top:306.69px;font-size:11px;line-height:11px;width:42px;text-align:center;">0.6</div>
<div class="a t" style="left:701px;top:306.69px;font-size:11px;line-height:11px;width:42px;text-align:center;">0.2</div>
<div class="a t" style="left:744px;top:306.69px;font-size:11px;line-height:11px;width:42px;text-align:center;">0</div>
<div class="a t" style="left:959px;top:306.69px;font-size:11px;line-height:11px;width:89px;text-align:center;">WIND</div>
<div class="a" style="left:18px;top:320px;width:21px;height:16px;background:#fdf5e6;"></div>
<div class="a" style="left:40px;top:320px;width:149px;height:16px;background:#fdf5e6;"></div>
<div class="a" style="left:190px;top:320px;width:99px;height:16px;background:#ffe8c0;"></div>
<div class="a" style="left:290px;top:320px;width:110px;height:16px;background:#ffe8c0;"></div>
<div class="a" style="left:401px;top:320px;width:42px;height:16px;background:#ffe8c0;"></div>
<div class="a" style="left:444px;top:320px;width:42px;height:16px;background:#ffe8c0;"></div>
<div class="a" style="left:487px;top:320px;width:42px;height:16px;background:#ffe8c0;"></div>
<div class="a" style="left:530px;top:320px;width:42px;height:16px;background:#ffe8c0;"></div>
<div class="a" style="left:573px;top:320px;width:42px;height:16px;background:#ffe8c0;"></div>
<div class="a" style="left:616px;top:320px;width:42px;height:16px;background:#ffe8c0;"></div>
<div class="a" style="left:659px;top:320px;width:42px;height:16px;background:#ffe8c0;"></div>
<div class="a" style="left:702px;top:320px;width:42px;height:16px;background:#ffe8c0;"></div>
<div class="a" style="left:745px;top:320px;width:42px;height:16px;background:#ffe8c0;"></div>
<div class="a" style="left:788px;top:320px;width:42px;height:16px;background:#ffe8c0;"></div>
<div class="a" style="left:831px;top:320px;width:42px;height:16px;background:#ffe8c0;"></div>
<div class="a" style="left:874px;top:320px;width:42px;height:16px;background:#ffe8c0;"></div>
<div class="a" style="left:917px;top:320px;width:42px;height:16px;background:#ffe8c0;"></div>
<div class="a" style="left:960px;top:320px;width:89px;height:16px;background:#ffe8c0;"></div>
<div class="a" style="left:1050px;top:320px;width:99px;height:16px;background:#fdf5e6;"></div>
<div class="a t" style="left:20.5px;top:323.69px;font-size:11px;line-height:11px;">14</div>
<div class="a t" style="left:44px;top:323.69px;font-size:11px;line-height:11px;letter-spacing:0.020px">Earthquake, Ae</div>
<div class="a t" style="left:194.5px;top:323.69px;font-size:11px;line-height:11px;letter-spacing:-0.017px">Earthquake, Aed</div>
<div class="a t" style="left:289px;top:323.69px;font-size:11px;line-height:11px;width:110px;text-align:center;">1</div>
<div class="a t" style="left:400px;top:323.69px;font-size:11px;line-height:11px;width:42px;text-align:center;">1</div>
<div class="a t" style="left:529px;top:323.69px;font-size:11px;line-height:11px;width:42px;text-align:center;">1</div>
<div class="a t" style="left:701px;top:323.69px;font-size:11px;line-height:11px;width:42px;text-align:center;">1</div>
<div class="a t" style="left:744px;top:323.69px;font-size:11px;line-height:11px;width:42px;text-align:center;">1</div>
<div class="a t" style="left:959px;top:323.69px;font-size:11px;line-height:11px;width:89px;text-align:center;">SEIS</div>
<div class="a" style="left:18px;top:337px;width:21px;height:16px;background:#fffff0;"></div>
<div class="a" style="left:40px;top:337px;width:149px;height:16px;background:#fffff0;"></div>
<div class="a" style="left:190px;top:337px;width:99px;height:16px;background:#fffff0;"></div>
<div class="a" style="left:290px;top:337px;width:110px;height:16px;background:#fffff0;"></div>
<div class="a" style="left:401px;top:337px;width:42px;height:16px;background:#fffff0;"></div>
<div class="a" style="left:444px;top:337px;width:42px;height:16px;background:#fffff0;"></div>
<div class="a" style="left:487px;top:337px;width:42px;height:16px;background:#fffff0;"></div>
<div class="a" style="left:530px;top:337px;width:42px;height:16px;background:#fffff0;"></div>
<div class="a" style="left:573px;top:337px;width:42px;height:16px;background:#fffff0;"></div>
<div class="a" style="left:616px;top:337px;width:42px;height:16px;background:#fffff0;"></div>
<div class="a" style="left:659px;top:337px;width:42px;height:16px;background:#fffff0;"></div>
<div class="a" style="left:702px;top:337px;width:42px;height:16px;background:#fffff0;"></div>
<div class="a" style="left:745px;top:337px;width:42px;height:16px;background:#fffff0;"></div>
<div class="a" style="left:788px;top:337px;width:42px;height:16px;background:#fffff0;"></div>
<div class="a" style="left:831px;top:337px;width:42px;height:16px;background:#fffff0;"></div>
<div class="a" style="left:874px;top:337px;width:42px;height:16px;background:#fffff0;"></div>
<div class="a" style="left:917px;top:337px;width:42px;height:16px;background:#fffff0;"></div>
<div class="a" style="left:960px;top:337px;width:89px;height:16px;background:#fffff0;"></div>
<div class="a" style="left:1050px;top:337px;width:99px;height:16px;background:#fffff0;"></div>
<div class="a t" style="left:20.5px;top:340.69px;font-size:11px;line-height:11px;">15</div>
<div class="a t" style="left:44px;top:340.69px;font-size:11px;line-height:11px;letter-spacing:-0.076px">Specific, A</div>
<div class="a t" style="left:194.5px;top:340.69px;font-size:11px;line-height:11px;letter-spacing:-0.073px">Emergency, Ad</div>
<div class="a t" style="left:289px;top:340.69px;font-size:11px;line-height:11px;width:110px;text-align:center;">1</div>
<div class="a t" style="left:400px;top:340.69px;font-size:11px;line-height:11px;width:42px;text-align:center;">1</div>
<div class="a t" style="left:529px;top:340.69px;font-size:11px;line-height:11px;width:42px;text-align:center;">1</div>
<div class="a t" style="left:701px;top:340.69px;font-size:11px;line-height:11px;width:42px;text-align:center;">1</div>
<div class="a t" style="left:744px;top:340.69px;font-size:11px;line-height:11px;width:42px;text-align:center;">1</div>
<div class="a t" style="left:959px;top:340.69px;font-size:11px;line-height:11px;width:89px;text-align:center;">ACCI</div>
<div class="a" style="left:18px;top:354px;width:21px;height:16px;background:#fdf5e6;"></div>
<div class="a" style="left:40px;top:354px;width:149px;height:16px;background:#fdf5e6;"></div>
<div class="a" style="left:190px;top:354px;width:99px;height:16px;background:#fdf5e6;"></div>
<div class="a" style="left:290px;top:354px;width:110px;height:16px;background:#fdf5e6;"></div>
<div class="a" style="left:401px;top:354px;width:42px;height:16px;background:#fdf5e6;"></div>
<div class="a" style="left:444px;top:354px;width:42px;height:16px;background:#fdf5e6;"></div>
<div class="a" style="left:487px;top:354px;width:42px;height:16px;background:#fdf5e6;"></div>
<div class="a" style="left:530px;top:354px;width:42px;height:16px;background:#fdf5e6;"></div>
<div class="a" style="left:573px;top:354px;width:42px;height:16px;background:#fdf5e6;"></div>
<div class="a" style="left:616px;top:354px;width:42px;height:16px;background:#fdf5e6;"></div>
<div class="a" style="left:659px;top:354px;width:42px;height:16px;background:#fdf5e6;"></div>
<div class="a" style="left:702px;top:354px;width:42px;height:16px;background:#fdf5e6;"></div>
<div class="a" style="left:745px;top:354px;width:42px;height:16px;background:#fdf5e6;"></div>
<div class="a" style="left:788px;top:354px;width:42px;height:16px;background:#fdf5e6;"></div>
<div class="a" style="left:831px;top:354px;width:42px;height:16px;background:#fdf5e6;"></div>
<div class="a" style="left:874px;top:354px;width:42px;height:16px;background:#fdf5e6;"></div>
<div class="a" style="left:917px;top:354px;width:42px;height:16px;background:#fdf5e6;"></div>
<div class="a" style="left:960px;top:354px;width:89px;height:16px;background:#fdf5e6;"></div>
<div class="a" style="left:1050px;top:354px;width:99px;height:16px;background:#fdf5e6;"></div>
<div class="a t" style="left:20.5px;top:357.69px;font-size:11px;line-height:11px;">16</div>
<div class="a t" style="left:44px;top:357.69px;font-size:11px;line-height:11px;letter-spacing:0.172px">Inactive, Qo</div>
<div class="a t" style="left:194.5px;top:357.69px;font-size:11px;line-height:11px;letter-spacing:0.154px">Inactive</div>
<div class="a t" style="left:959px;top:357.69px;font-size:11px;line-height:11px;width:89px;text-align:center;">NO_ACT</div>
<div class="a" style="left:14px;top:115px;width:1168px;height:1px;background:#ececec;"></div>
<div class="a" style="left:14px;top:132px;width:1168px;height:1px;background:#ececec;"></div>
<div class="a" style="left:14px;top:149px;width:1168px;height:1px;background:#ececec;"></div>
<div class="a" style="left:14px;top:166px;width:1168px;height:1px;background:#ececec;"></div>
<div class="a" style="left:14px;top:183px;width:1168px;height:1px;background:#ececec;"></div>
<div class="a" style="left:14px;top:200px;width:1168px;height:1px;background:#ececec;"></div>
<div class="a" style="left:14px;top:217px;width:1168px;height:1px;background:#ececec;"></div>
<div class="a" style="left:14px;top:234px;width:1168px;height:1px;background:#ececec;"></div>
<div class="a" style="left:14px;top:251px;width:1168px;height:1px;background:#ececec;"></div>
<div class="a" style="left:14px;top:268px;width:1168px;height:1px;background:#ececec;"></div>
<div class="a" style="left:14px;top:285px;width:1168px;height:1px;background:#ececec;"></div>
<div class="a" style="left:14px;top:302px;width:1168px;height:1px;background:#ececec;"></div>
<div class="a" style="left:14px;top:319px;width:1168px;height:1px;background:#ececec;"></div>
<div class="a" style="left:14px;top:336px;width:1168px;height:1px;background:#ececec;"></div>
<div class="a" style="left:14px;top:353px;width:1168px;height:1px;background:#ececec;"></div>
<div class="a" style="left:14px;top:370px;width:1168px;height:1px;background:#ececec;"></div>
<div class="a" style="left:14px;top:387px;width:1168px;height:1px;background:#ececec;"></div>
<div class="a" style="left:14px;top:404px;width:1168px;height:1px;background:#ececec;"></div>
<div class="a" style="left:14px;top:421px;width:1168px;height:1px;background:#ececec;"></div>
<div class="a" style="left:14px;top:438px;width:1168px;height:1px;background:#ececec;"></div>
<div class="a" style="left:14px;top:455px;width:1168px;height:1px;background:#ececec;"></div>
<div class="a" style="left:14px;top:472px;width:1168px;height:1px;background:#ececec;"></div>
<div class="a" style="left:14px;top:489px;width:1168px;height:1px;background:#ececec;"></div>
<div class="a" style="left:39px;top:99px;width:1px;height:391px;background:#ececec;"></div>
<div class="a" style="left:189px;top:99px;width:1px;height:391px;background:#ececec;"></div>
<div class="a" style="left:289px;top:99px;width:1px;height:391px;background:#ececec;"></div>
<div class="a" style="left:400px;top:99px;width:1px;height:391px;background:#ececec;"></div>
<div class="a" style="left:443px;top:99px;width:1px;height:391px;background:#ececec;"></div>
<div class="a" style="left:486px;top:99px;width:1px;height:391px;background:#ececec;"></div>
<div class="a" style="left:529px;top:99px;width:1px;height:391px;background:#ececec;"></div>
<div class="a" style="left:572px;top:99px;width:1px;height:391px;background:#ececec;"></div>
<div class="a" style="left:615px;top:99px;width:1px;height:391px;background:#ececec;"></div>
<div class="a" style="left:658px;top:99px;width:1px;height:391px;background:#ececec;"></div>
<div class="a" style="left:701px;top:99px;width:1px;height:391px;background:#ececec;"></div>
<div class="a" style="left:744px;top:99px;width:1px;height:391px;background:#ececec;"></div>
<div class="a" style="left:787px;top:99px;width:1px;height:391px;background:#ececec;"></div>
<div class="a" style="left:830px;top:99px;width:1px;height:391px;background:#ececec;"></div>
<div class="a" style="left:873px;top:99px;width:1px;height:391px;background:#ececec;"></div>
<div class="a" style="left:916px;top:99px;width:1px;height:391px;background:#ececec;"></div>
<div class="a" style="left:959px;top:99px;width:1px;height:391px;background:#ececec;"></div>
<div class="a" style="left:1049px;top:99px;width:1px;height:391px;background:#ececec;"></div>
<div class="a" style="left:1149px;top:99px;width:1px;height:391px;background:#ececec;"></div>
<div class="a" style="left:12px;top:497px;width:1172px;height:254px;border:1px solid #7a7d86;background:#fff;box-sizing:border-box"></div>
<div class="a" style="left:53px;top:499px;width:1px;height:24px;background:#e3e3e3;"></div>
<div class="a" style="left:223px;top:499px;width:1px;height:24px;background:#e3e3e3;"></div>
<div class="a" style="left:268px;top:499px;width:1px;height:24px;background:#e3e3e3;"></div>
<div class="a" style="left:313px;top:499px;width:1px;height:24px;background:#e3e3e3;"></div>
<div class="a" style="left:358px;top:499px;width:1px;height:24px;background:#e3e3e3;"></div>
<div class="a" style="left:403px;top:499px;width:1px;height:24px;background:#e3e3e3;"></div>
<div class="a" style="left:448px;top:499px;width:1px;height:24px;background:#e3e3e3;"></div>
<div class="a" style="left:493px;top:499px;width:1px;height:24px;background:#e3e3e3;"></div>
<div class="a" style="left:538px;top:499px;width:1px;height:24px;background:#e3e3e3;"></div>
<div class="a" style="left:583px;top:499px;width:1px;height:24px;background:#e3e3e3;"></div>
<div class="a" style="left:628px;top:499px;width:1px;height:24px;background:#e3e3e3;"></div>
<div class="a" style="left:673px;top:499px;width:1px;height:24px;background:#e3e3e3;"></div>
<div class="a" style="left:718px;top:499px;width:1px;height:24px;background:#e3e3e3;"></div>
<div class="a" style="left:763px;top:499px;width:1px;height:24px;background:#e3e3e3;"></div>
<div class="a" style="left:808px;top:499px;width:1px;height:24px;background:#e3e3e3;"></div>
<div class="a" style="left:853px;top:499px;width:1px;height:24px;background:#e3e3e3;"></div>
<div class="a" style="left:898px;top:499px;width:1px;height:24px;background:#e3e3e3;"></div>
<div class="a" style="left:943px;top:499px;width:1px;height:24px;background:#e3e3e3;"></div>
<div class="a t" style="left:18.5px;top:505.69px;font-size:11px;line-height:11px;">№</div>
<div class="a t" style="left:58.5px;top:505.69px;font-size:11px;line-height:11px;letter-spacing:-0.190px">Load combination</div>
<div class="a t" style="left:224px;top:505.69px;font-size:11px;line-height:11px;width:44px;text-align:center;">Gk</div>
<div class="a t" style="left:269px;top:505.69px;font-size:11px;line-height:11px;width:44px;text-align:center;">Qk,1</div>
<div class="a t" style="left:314px;top:505.69px;font-size:11px;line-height:11px;width:44px;text-align:center;">Qk,A</div>
<div class="a t" style="left:359px;top:505.69px;font-size:11px;line-height:11px;width:44px;text-align:center;">Qk,B</div>
<div class="a t" style="left:404px;top:505.69px;font-size:11px;line-height:11px;width:44px;text-align:center;">Qk,C</div>
<div class="a t" style="left:449px;top:505.69px;font-size:11px;line-height:11px;width:44px;text-align:center;">Qk,D</div>
<div class="a t" style="left:494px;top:505.69px;font-size:11px;line-height:11px;width:44px;text-align:center;">Qk,E</div>
<div class="a t" style="left:539px;top:505.69px;font-size:11px;line-height:11px;width:44px;text-align:center;">Qk,F</div>
<div class="a t" style="left:584px;top:505.69px;font-size:11px;line-height:11px;width:44px;text-align:center;">Qk,G</div>
<div class="a t" style="left:629px;top:505.69px;font-size:11px;line-height:11px;width:44px;text-align:center;">Qk,H</div>
<div class="a t" style="left:674px;top:505.69px;font-size:11px;line-height:11px;width:44px;text-align:center;">Qk,T</div>
<div class="a t" style="left:719px;top:505.69px;font-size:11px;line-height:11px;width:44px;text-align:center;">Qk,S</div>
<div class="a t" style="left:764px;top:505.69px;font-size:11px;line-height:11px;width:44px;text-align:center;">Qk,S&lt;</div>
<div class="a t" style="left:809px;top:505.69px;font-size:11px;line-height:11px;width:44px;text-align:center;">Qk,W</div>
<div class="a t" style="left:854px;top:505.69px;font-size:11px;line-height:11px;width:44px;text-align:center;">Aed</div>
<div class="a t" style="left:899px;top:505.69px;font-size:11px;line-height:11px;width:44px;text-align:center;">Ad</div>
<div class="a t" style="left:948.5px;top:505.69px;font-size:11px;line-height:11px;">Formula</div>
<div class="a" style="left:34px;top:523px;width:20px;height:16px;background:#f8f8fd;"></div>
<div class="a" style="left:55px;top:523px;width:169px;height:16px;background:#f8f8fd;"></div>
<div class="a" style="left:225px;top:523px;width:44px;height:16px;background:#ffffc0;"></div>
<div class="a" style="left:270px;top:523px;width:44px;height:16px;background:#f8f8fd;"></div>
<div class="a" style="left:315px;top:523px;width:44px;height:16px;background:#c0ffc0;"></div>
<div class="a" style="left:360px;top:523px;width:44px;height:16px;background:#f8f8fd;"></div>
<div class="a" style="left:405px;top:523px;width:44px;height:16px;background:#f3f3f6;"></div>
<div class="a" style="left:450px;top:523px;width:44px;height:16px;background:#f8f8fd;"></div>
<div class="a" style="left:495px;top:523px;width:44px;height:16px;background:#c0ffc0;"></div>
<div class="a" style="left:540px;top:523px;width:44px;height:16px;background:#f8f8fd;"></div>
<div class="a" style="left:585px;top:523px;width:44px;height:16px;background:#f3f3f6;"></div>
<div class="a" style="left:630px;top:523px;width:44px;height:16px;background:#f8f8fd;"></div>
<div class="a" style="left:675px;top:523px;width:44px;height:16px;background:#f3f3f6;"></div>
<div class="a" style="left:720px;top:523px;width:44px;height:16px;background:#c0ffc0;"></div>
<div class="a" style="left:765px;top:523px;width:44px;height:16px;background:#f3f3f6;"></div>
<div class="a" style="left:810px;top:523px;width:44px;height:16px;background:#f8f8fd;"></div>
<div class="a" style="left:855px;top:523px;width:44px;height:16px;background:#ffe8c0;"></div>
<div class="a" style="left:900px;top:523px;width:44px;height:16px;background:#f8f8fd;"></div>
<div class="a" style="left:945px;top:523px;width:237px;height:16px;background:#c0ffc0;"></div>
<div class="a" style="left:34px;top:540px;width:20px;height:16px;background:#f8f8fd;"></div>
<div class="a" style="left:55px;top:540px;width:169px;height:16px;background:#f8f8fd;"></div>
<div class="a" style="left:225px;top:540px;width:44px;height:16px;background:#ffffc0;"></div>
<div class="a" style="left:270px;top:540px;width:44px;height:16px;background:#f8f8fd;"></div>
<div class="a" style="left:315px;top:540px;width:44px;height:16px;background:#c0ffc0;"></div>
<div class="a" style="left:360px;top:540px;width:44px;height:16px;background:#f8f8fd;"></div>
<div class="a" style="left:405px;top:540px;width:44px;height:16px;background:#f3f3f6;"></div>
<div class="a" style="left:450px;top:540px;width:44px;height:16px;background:#f8f8fd;"></div>
<div class="a" style="left:495px;top:540px;width:44px;height:16px;background:#c0ffc0;"></div>
<div class="a" style="left:540px;top:540px;width:44px;height:16px;background:#f8f8fd;"></div>
<div class="a" style="left:585px;top:540px;width:44px;height:16px;background:#f3f3f6;"></div>
<div class="a" style="left:630px;top:540px;width:44px;height:16px;background:#f8f8fd;"></div>
<div class="a" style="left:675px;top:540px;width:44px;height:16px;background:#f3f3f6;"></div>
<div class="a" style="left:720px;top:540px;width:44px;height:16px;background:#c0ffc0;"></div>
<div class="a" style="left:765px;top:540px;width:44px;height:16px;background:#f3f3f6;"></div>
<div class="a" style="left:810px;top:540px;width:44px;height:16px;background:#f8f8fd;"></div>
<div class="a" style="left:855px;top:540px;width:44px;height:16px;background:#ffe8c0;"></div>
<div class="a" style="left:900px;top:540px;width:44px;height:16px;background:#f8f8fd;"></div>
<div class="a" style="left:945px;top:540px;width:237px;height:16px;background:#c0ffc0;"></div>
<div class="a" style="left:34px;top:557px;width:20px;height:16px;background:#f8f8fd;"></div>
<div class="a" style="left:55px;top:557px;width:169px;height:16px;background:#f8f8fd;"></div>
<div class="a" style="left:225px;top:557px;width:44px;height:16px;background:#ffffc0;"></div>
<div class="a" style="left:270px;top:557px;width:44px;height:16px;background:#f8f8fd;"></div>
<div class="a" style="left:315px;top:557px;width:44px;height:16px;background:#c0ffc0;"></div>
<div class="a" style="left:360px;top:557px;width:44px;height:16px;background:#f8f8fd;"></div>
<div class="a" style="left:405px;top:557px;width:44px;height:16px;background:#f3f3f6;"></div>
<div class="a" style="left:450px;top:557px;width:44px;height:16px;background:#f8f8fd;"></div>
<div class="a" style="left:495px;top:557px;width:44px;height:16px;background:#c0ffc0;"></div>
<div class="a" style="left:540px;top:557px;width:44px;height:16px;background:#f8f8fd;"></div>
<div class="a" style="left:585px;top:557px;width:44px;height:16px;background:#f3f3f6;"></div>
<div class="a" style="left:630px;top:557px;width:44px;height:16px;background:#f8f8fd;"></div>
<div class="a" style="left:675px;top:557px;width:44px;height:16px;background:#f3f3f6;"></div>
<div class="a" style="left:720px;top:557px;width:44px;height:16px;background:#c0ffc0;"></div>
<div class="a" style="left:765px;top:557px;width:44px;height:16px;background:#f3f3f6;"></div>
<div class="a" style="left:810px;top:557px;width:44px;height:16px;background:#f8f8fd;"></div>
<div class="a" style="left:855px;top:557px;width:44px;height:16px;background:#ffe8c0;"></div>
<div class="a" style="left:900px;top:557px;width:44px;height:16px;background:#f8f8fd;"></div>
<div class="a" style="left:945px;top:557px;width:237px;height:16px;background:#c0ffc0;"></div>
<div class="a" style="left:34px;top:574px;width:20px;height:16px;background:#f8f8fd;"></div>
<div class="a" style="left:55px;top:574px;width:169px;height:16px;background:#f8f8fd;"></div>
<div class="a" style="left:225px;top:574px;width:44px;height:16px;background:#ffffc0;"></div>
<div class="a" style="left:270px;top:574px;width:44px;height:16px;background:#f8f8fd;"></div>
<div class="a" style="left:315px;top:574px;width:44px;height:16px;background:#c0ffc0;"></div>
<div class="a" style="left:360px;top:574px;width:44px;height:16px;background:#f8f8fd;"></div>
<div class="a" style="left:405px;top:574px;width:44px;height:16px;background:#f3f3f6;"></div>
<div class="a" style="left:450px;top:574px;width:44px;height:16px;background:#f8f8fd;"></div>
<div class="a" style="left:495px;top:574px;width:44px;height:16px;background:#c0ffc0;"></div>
<div class="a" style="left:540px;top:574px;width:44px;height:16px;background:#f8f8fd;"></div>
<div class="a" style="left:585px;top:574px;width:44px;height:16px;background:#f3f3f6;"></div>
<div class="a" style="left:630px;top:574px;width:44px;height:16px;background:#f8f8fd;"></div>
<div class="a" style="left:675px;top:574px;width:44px;height:16px;background:#f3f3f6;"></div>
<div class="a" style="left:720px;top:574px;width:44px;height:16px;background:#c0ffc0;"></div>
<div class="a" style="left:765px;top:574px;width:44px;height:16px;background:#f3f3f6;"></div>
<div class="a" style="left:810px;top:574px;width:44px;height:16px;background:#f8f8fd;"></div>
<div class="a" style="left:855px;top:574px;width:44px;height:16px;background:#ffe8c0;"></div>
<div class="a" style="left:900px;top:574px;width:44px;height:16px;background:#f8f8fd;"></div>
<div class="a" style="left:945px;top:574px;width:237px;height:16px;background:#c0ffc0;"></div>
<div class="a" style="left:34px;top:591px;width:20px;height:16px;background:#f8f8fd;"></div>
<div class="a" style="left:55px;top:591px;width:169px;height:16px;background:#f8f8fd;"></div>
<div class="a" style="left:225px;top:591px;width:44px;height:16px;background:#ffffc0;"></div>
<div class="a" style="left:270px;top:591px;width:44px;height:16px;background:#f8f8fd;"></div>
<div class="a" style="left:315px;top:591px;width:44px;height:16px;background:#c0ffc0;"></div>
<div class="a" style="left:360px;top:591px;width:44px;height:16px;background:#f8f8fd;"></div>
<div class="a" style="left:405px;top:591px;width:44px;height:16px;background:#f3f3f6;"></div>
<div class="a" style="left:450px;top:591px;width:44px;height:16px;background:#f8f8fd;"></div>
<div class="a" style="left:495px;top:591px;width:44px;height:16px;background:#c0ffc0;"></div>
<div class="a" style="left:540px;top:591px;width:44px;height:16px;background:#f8f8fd;"></div>
<div class="a" style="left:585px;top:591px;width:44px;height:16px;background:#f3f3f6;"></div>
<div class="a" style="left:630px;top:591px;width:44px;height:16px;background:#f8f8fd;"></div>
<div class="a" style="left:675px;top:591px;width:44px;height:16px;background:#f3f3f6;"></div>
<div class="a" style="left:720px;top:591px;width:44px;height:16px;background:#c0ffc0;"></div>
<div class="a" style="left:765px;top:591px;width:44px;height:16px;background:#f3f3f6;"></div>
<div class="a" style="left:810px;top:591px;width:44px;height:16px;background:#f8f8fd;"></div>
<div class="a" style="left:855px;top:591px;width:44px;height:16px;background:#ffe8c0;"></div>
<div class="a" style="left:900px;top:591px;width:44px;height:16px;background:#f8f8fd;"></div>
<div class="a" style="left:945px;top:591px;width:237px;height:16px;background:#c0ffc0;"></div>
<div class="a" style="left:34px;top:608px;width:20px;height:16px;background:#f8f8fd;"></div>
<div class="a" style="left:55px;top:608px;width:169px;height:16px;background:#f8f8fd;"></div>
<div class="a" style="left:225px;top:608px;width:44px;height:16px;background:#ffffc0;"></div>
<div class="a" style="left:270px;top:608px;width:44px;height:16px;background:#f8f8fd;"></div>
<div class="a" style="left:315px;top:608px;width:44px;height:16px;background:#c0ffc0;"></div>
<div class="a" style="left:360px;top:608px;width:44px;height:16px;background:#f8f8fd;"></div>
<div class="a" style="left:405px;top:608px;width:44px;height:16px;background:#f3f3f6;"></div>
<div class="a" style="left:450px;top:608px;width:44px;height:16px;background:#f8f8fd;"></div>
<div class="a" style="left:495px;top:608px;width:44px;height:16px;background:#c0ffc0;"></div>
<div class="a" style="left:540px;top:608px;width:44px;height:16px;background:#f8f8fd;"></div>
<div class="a" style="left:585px;top:608px;width:44px;height:16px;background:#f3f3f6;"></div>
<div class="a" style="left:630px;top:608px;width:44px;height:16px;background:#f8f8fd;"></div>
<div class="a" style="left:675px;top:608px;width:44px;height:16px;background:#f3f3f6;"></div>
<div class="a" style="left:720px;top:608px;width:44px;height:16px;background:#c0ffc0;"></div>
<div class="a" style="left:765px;top:608px;width:44px;height:16px;background:#f3f3f6;"></div>
<div class="a" style="left:810px;top:608px;width:44px;height:16px;background:#f8f8fd;"></div>
<div class="a" style="left:855px;top:608px;width:44px;height:16px;background:#ffe8c0;"></div>
<div class="a" style="left:900px;top:608px;width:44px;height:16px;background:#f8f8fd;"></div>
<div class="a" style="left:945px;top:608px;width:237px;height:16px;background:#c0ffc0;"></div>
<div class="a" style="left:34px;top:625px;width:20px;height:16px;background:#f8f8fd;"></div>
<div class="a" style="left:55px;top:625px;width:169px;height:16px;background:#f8f8fd;"></div>
<div class="a" style="left:225px;top:625px;width:44px;height:16px;background:#ffffc0;"></div>
<div class="a" style="left:270px;top:625px;width:44px;height:16px;background:#f8f8fd;"></div>
<div class="a" style="left:315px;top:625px;width:44px;height:16px;background:#c0ffc0;"></div>
<div class="a" style="left:360px;top:625px;width:44px;height:16px;background:#f8f8fd;"></div>
<div class="a" style="left:405px;top:625px;width:44px;height:16px;background:#f3f3f6;"></div>
<div class="a" style="left:450px;top:625px;width:44px;height:16px;background:#f8f8fd;"></div>
<div class="a" style="left:495px;top:625px;width:44px;height:16px;background:#c0ffc0;"></div>
<div class="a" style="left:540px;top:625px;width:44px;height:16px;background:#f8f8fd;"></div>
<div class="a" style="left:585px;top:625px;width:44px;height:16px;background:#f3f3f6;"></div>
<div class="a" style="left:630px;top:625px;width:44px;height:16px;background:#f8f8fd;"></div>
<div class="a" style="left:675px;top:625px;width:44px;height:16px;background:#f3f3f6;"></div>
<div class="a" style="left:720px;top:625px;width:44px;height:16px;background:#c0ffc0;"></div>
<div class="a" style="left:765px;top:625px;width:44px;height:16px;background:#f3f3f6;"></div>
<div class="a" style="left:810px;top:625px;width:44px;height:16px;background:#f8f8fd;"></div>
<div class="a" style="left:855px;top:625px;width:44px;height:16px;background:#ffe8c0;"></div>
<div class="a" style="left:900px;top:625px;width:44px;height:16px;background:#f8f8fd;"></div>
<div class="a" style="left:945px;top:625px;width:237px;height:16px;background:#c0ffc0;"></div>
<div class="a" style="left:34px;top:642px;width:20px;height:16px;background:#f8f8fd;"></div>
<div class="a" style="left:55px;top:642px;width:169px;height:16px;background:#f8f8fd;"></div>
<div class="a" style="left:225px;top:642px;width:44px;height:16px;background:#ffffc0;"></div>
<div class="a" style="left:270px;top:642px;width:44px;height:16px;background:#f8f8fd;"></div>
<div class="a" style="left:315px;top:642px;width:44px;height:16px;background:#c0ffc0;"></div>
<div class="a" style="left:360px;top:642px;width:44px;height:16px;background:#f8f8fd;"></div>
<div class="a" style="left:405px;top:642px;width:44px;height:16px;background:#f3f3f6;"></div>
<div class="a" style="left:450px;top:642px;width:44px;height:16px;background:#f8f8fd;"></div>
<div class="a" style="left:495px;top:642px;width:44px;height:16px;background:#c0ffc0;"></div>
<div class="a" style="left:540px;top:642px;width:44px;height:16px;background:#f8f8fd;"></div>
<div class="a" style="left:585px;top:642px;width:44px;height:16px;background:#f3f3f6;"></div>
<div class="a" style="left:630px;top:642px;width:44px;height:16px;background:#f8f8fd;"></div>
<div class="a" style="left:675px;top:642px;width:44px;height:16px;background:#f3f3f6;"></div>
<div class="a" style="left:720px;top:642px;width:44px;height:16px;background:#c0ffc0;"></div>
<div class="a" style="left:765px;top:642px;width:44px;height:16px;background:#f3f3f6;"></div>
<div class="a" style="left:810px;top:642px;width:44px;height:16px;background:#f8f8fd;"></div>
<div class="a" style="left:855px;top:642px;width:44px;height:16px;background:#ffe8c0;"></div>
<div class="a" style="left:900px;top:642px;width:44px;height:16px;background:#f8f8fd;"></div>
<div class="a" style="left:945px;top:642px;width:237px;height:16px;background:#c0ffc0;"></div>
<div class="a" style="left:34px;top:659px;width:20px;height:16px;background:#f8f8fd;"></div>
<div class="a" style="left:55px;top:659px;width:169px;height:16px;background:#f8f8fd;"></div>
<div class="a" style="left:225px;top:659px;width:44px;height:16px;background:#ffffc0;"></div>
<div class="a" style="left:270px;top:659px;width:44px;height:16px;background:#f8f8fd;"></div>
<div class="a" style="left:315px;top:659px;width:44px;height:16px;background:#c0ffc0;"></div>
<div class="a" style="left:360px;top:659px;width:44px;height:16px;background:#f8f8fd;"></div>
<div class="a" style="left:405px;top:659px;width:44px;height:16px;background:#f3f3f6;"></div>
<div class="a" style="left:450px;top:659px;width:44px;height:16px;background:#f8f8fd;"></div>
<div class="a" style="left:495px;top:659px;width:44px;height:16px;background:#c0ffc0;"></div>
<div class="a" style="left:540px;top:659px;width:44px;height:16px;background:#f8f8fd;"></div>
<div class="a" style="left:585px;top:659px;width:44px;height:16px;background:#f3f3f6;"></div>
<div class="a" style="left:630px;top:659px;width:44px;height:16px;background:#f8f8fd;"></div>
<div class="a" style="left:675px;top:659px;width:44px;height:16px;background:#f3f3f6;"></div>
<div class="a" style="left:720px;top:659px;width:44px;height:16px;background:#c0ffc0;"></div>
<div class="a" style="left:765px;top:659px;width:44px;height:16px;background:#f3f3f6;"></div>
<div class="a" style="left:810px;top:659px;width:44px;height:16px;background:#f8f8fd;"></div>
<div class="a" style="left:855px;top:659px;width:44px;height:16px;background:#ffe8c0;"></div>
<div class="a" style="left:900px;top:659px;width:44px;height:16px;background:#f8f8fd;"></div>
<div class="a" style="left:945px;top:659px;width:237px;height:16px;background:#c0ffc0;"></div>
<div class="a" style="left:34px;top:676px;width:20px;height:16px;background:#f8f8fd;"></div>
<div class="a" style="left:55px;top:676px;width:169px;height:16px;background:#f8f8fd;"></div>
<div class="a" style="left:225px;top:676px;width:44px;height:16px;background:#ffffc0;"></div>
<div class="a" style="left:270px;top:676px;width:44px;height:16px;background:#f8f8fd;"></div>
<div class="a" style="left:315px;top:676px;width:44px;height:16px;background:#c0ffc0;"></div>
<div class="a" style="left:360px;top:676px;width:44px;height:16px;background:#f8f8fd;"></div>
<div class="a" style="left:405px;top:676px;width:44px;height:16px;background:#f3f3f6;"></div>
<div class="a" style="left:450px;top:676px;width:44px;height:16px;background:#f8f8fd;"></div>
<div class="a" style="left:495px;top:676px;width:44px;height:16px;background:#c0ffc0;"></div>
<div class="a" style="left:540px;top:676px;width:44px;height:16px;background:#f8f8fd;"></div>
<div class="a" style="left:585px;top:676px;width:44px;height:16px;background:#f3f3f6;"></div>
<div class="a" style="left:630px;top:676px;width:44px;height:16px;background:#f8f8fd;"></div>
<div class="a" style="left:675px;top:676px;width:44px;height:16px;background:#f3f3f6;"></div>
<div class="a" style="left:720px;top:676px;width:44px;height:16px;background:#c0ffc0;"></div>
<div class="a" style="left:765px;top:676px;width:44px;height:16px;background:#f3f3f6;"></div>
<div class="a" style="left:810px;top:676px;width:44px;height:16px;background:#f8f8fd;"></div>
<div class="a" style="left:855px;top:676px;width:44px;height:16px;background:#ffe8c0;"></div>
<div class="a" style="left:900px;top:676px;width:44px;height:16px;background:#f8f8fd;"></div>
<div class="a" style="left:945px;top:676px;width:237px;height:16px;background:#c0ffc0;"></div>
<div class="a t" style="left:36.5px;top:526.69px;font-size:11px;line-height:11px;">1</div>
<div class="a t" style="left:59.5px;top:526.69px;font-size:11px;line-height:11px;letter-spacing:-0.353px">1 main(ULS) @1</div>
<div class="a t" style="left:224px;top:526.69px;font-size:11px;line-height:11px;width:44px;text-align:center;">1</div>
<div class="a t" style="left:269px;top:526.69px;font-size:11px;line-height:11px;width:44px;text-align:center;">1</div>
<div class="a t" style="left:314px;top:526.69px;font-size:11px;line-height:11px;width:44px;text-align:center;">0.7</div>
<div class="a t" style="left:359px;top:526.69px;font-size:11px;line-height:11px;width:44px;text-align:center;">0.7</div>
<div class="a t" style="left:404px;top:526.69px;font-size:11px;line-height:11px;width:44px;text-align:center;">0.7</div>
<div class="a t" style="left:449px;top:526.69px;font-size:11px;line-height:11px;width:44px;text-align:center;">0.7</div>
<div class="a t" style="left:494px;top:526.69px;font-size:11px;line-height:11px;width:44px;text-align:center;">1</div>
<div class="a t" style="left:539px;top:526.69px;font-size:11px;line-height:11px;width:44px;text-align:center;">0.7</div>
<div class="a t" style="left:584px;top:526.69px;font-size:11px;line-height:11px;width:44px;text-align:center;">0.7</div>
<div class="a t" style="left:629px;top:526.69px;font-size:11px;line-height:11px;width:44px;text-align:center;">0.7</div>
<div class="a t" style="left:674px;top:526.69px;font-size:11px;line-height:11px;width:44px;text-align:center;">0.6</div>
<div class="a t" style="left:719px;top:526.69px;font-size:11px;line-height:11px;width:44px;text-align:center;">0.7</div>
<div class="a t" style="left:764px;top:526.69px;font-size:11px;line-height:11px;width:44px;text-align:center;">0.5</div>
<div class="a t" style="left:809px;top:526.69px;font-size:11px;line-height:11px;width:44px;text-align:center;">0.6</div>
<div class="a t" style="left:948.5px;top:526.69px;font-size:11px;line-height:11px;letter-spacing:-0.001px">ΣYgj•Gkj + Yq1•Qk1+ΣYqi•Ψ0i•Qki (6.10)</div>
<div class="a" style="left:18px;top:525px;width:13px;height:13px;background:#f3f3f3;border:1px solid #5c5c5c;border-radius:3px;box-sizing:border-box"></div>
<div class="a t" style="left:36.5px;top:543.69px;font-size:11px;line-height:11px;">2</div>
<div class="a t" style="left:59.5px;top:543.69px;font-size:11px;line-height:11px;letter-spacing:-0.353px">1 main(ULS) @1</div>
<div class="a t" style="left:224px;top:543.69px;font-size:11px;line-height:11px;width:44px;text-align:center;">1</div>
<div class="a t" style="left:269px;top:543.69px;font-size:11px;line-height:11px;width:44px;text-align:center;">0.7</div>
<div class="a t" style="left:314px;top:543.69px;font-size:11px;line-height:11px;width:44px;text-align:center;">0.7</div>
<div class="a t" style="left:359px;top:543.69px;font-size:11px;line-height:11px;width:44px;text-align:center;">0.7</div>
<div class="a t" style="left:404px;top:543.69px;font-size:11px;line-height:11px;width:44px;text-align:center;">0.7</div>
<div class="a t" style="left:449px;top:543.69px;font-size:11px;line-height:11px;width:44px;text-align:center;">0.7</div>
<div class="a t" style="left:494px;top:543.69px;font-size:11px;line-height:11px;width:44px;text-align:center;">1</div>
<div class="a t" style="left:539px;top:543.69px;font-size:11px;line-height:11px;width:44px;text-align:center;">0.7</div>
<div class="a t" style="left:584px;top:543.69px;font-size:11px;line-height:11px;width:44px;text-align:center;">0.7</div>
<div class="a t" style="left:629px;top:543.69px;font-size:11px;line-height:11px;width:44px;text-align:center;">0.7</div>
<div class="a t" style="left:674px;top:543.69px;font-size:11px;line-height:11px;width:44px;text-align:center;">0.6</div>
<div class="a t" style="left:719px;top:543.69px;font-size:11px;line-height:11px;width:44px;text-align:center;">0.7</div>
<div class="a t" style="left:764px;top:543.69px;font-size:11px;line-height:11px;width:44px;text-align:center;">0.5</div>
<div class="a t" style="left:809px;top:543.69px;font-size:11px;line-height:11px;width:44px;text-align:center;">0.6</div>
<div class="a t" style="left:948.5px;top:543.69px;font-size:11px;line-height:11px;letter-spacing:-0.013px">ΣYgj•Gkj + Yq1•Ψ01•Qk1+ΣYqi•Ψ0i•Qki (6.10a)</div>
<div class="a" style="left:18px;top:542px;width:13px;height:13px;background:#f3f3f3;border:1px solid #5c5c5c;border-radius:3px;box-sizing:border-box"></div>
<div class="a t" style="left:36.5px;top:560.69px;font-size:11px;line-height:11px;">3</div>
<div class="a t" style="left:59.5px;top:560.69px;font-size:11px;line-height:11px;letter-spacing:-0.353px">2 main(ULS) @1</div>
<div class="a t" style="left:224px;top:560.69px;font-size:11px;line-height:11px;width:44px;text-align:center;">0.85</div>
<div class="a t" style="left:269px;top:560.69px;font-size:11px;line-height:11px;width:44px;text-align:center;">1</div>
<div class="a t" style="left:314px;top:560.69px;font-size:11px;line-height:11px;width:44px;text-align:center;">0.7</div>
<div class="a t" style="left:359px;top:560.69px;font-size:11px;line-height:11px;width:44px;text-align:center;">0.7</div>
<div class="a t" style="left:404px;top:560.69px;font-size:11px;line-height:11px;width:44px;text-align:center;">0.7</div>
<div class="a t" style="left:449px;top:560.69px;font-size:11px;line-height:11px;width:44px;text-align:center;">0.7</div>
<div class="a t" style="left:494px;top:560.69px;font-size:11px;line-height:11px;width:44px;text-align:center;">1</div>
<div class="a t" style="left:539px;top:560.69px;font-size:11px;line-height:11px;width:44px;text-align:center;">0.7</div>
<div class="a t" style="left:584px;top:560.69px;font-size:11px;line-height:11px;width:44px;text-align:center;">0.7</div>
<div class="a t" style="left:629px;top:560.69px;font-size:11px;line-height:11px;width:44px;text-align:center;">0.7</div>
<div class="a t" style="left:674px;top:560.69px;font-size:11px;line-height:11px;width:44px;text-align:center;">0.6</div>
<div class="a t" style="left:719px;top:560.69px;font-size:11px;line-height:11px;width:44px;text-align:center;">0.7</div>
<div class="a t" style="left:764px;top:560.69px;font-size:11px;line-height:11px;width:44px;text-align:center;">0.5</div>
<div class="a t" style="left:809px;top:560.69px;font-size:11px;line-height:11px;width:44px;text-align:center;">0.6</div>
<div class="a t" style="left:948.5px;top:560.69px;font-size:11px;line-height:11px;letter-spacing:0.035px">Σξj•Ygj•Gkj + Yq1•Qk1+ΣYqi•Ψ0i•Qki (6.10b)</div>
<div class="a" style="left:18px;top:559px;width:13px;height:13px;background:#f3f3f3;border:1px solid #5c5c5c;border-radius:3px;box-sizing:border-box"></div>
<div class="a t" style="left:36.5px;top:577.69px;font-size:11px;line-height:11px;">4</div>
<div class="a t" style="left:59.5px;top:577.69px;font-size:11px;line-height:11px;letter-spacing:-0.311px">Specific Emergency(ULS) @2</div>
<div class="a t" style="left:224px;top:577.69px;font-size:11px;line-height:11px;width:44px;text-align:center;">1</div>
<div class="a t" style="left:269px;top:577.69px;font-size:11px;line-height:11px;width:44px;text-align:center;">0.5</div>
<div class="a t" style="left:314px;top:577.69px;font-size:11px;line-height:11px;width:44px;text-align:center;">0.3</div>
<div class="a t" style="left:359px;top:577.69px;font-size:11px;line-height:11px;width:44px;text-align:center;">0.3</div>
<div class="a t" style="left:404px;top:577.69px;font-size:11px;line-height:11px;width:44px;text-align:center;">0.6</div>
<div class="a t" style="left:449px;top:577.69px;font-size:11px;line-height:11px;width:44px;text-align:center;">0.6</div>
<div class="a t" style="left:494px;top:577.69px;font-size:11px;line-height:11px;width:44px;text-align:center;">0.8</div>
<div class="a t" style="left:539px;top:577.69px;font-size:11px;line-height:11px;width:44px;text-align:center;">0.6</div>
<div class="a t" style="left:584px;top:577.69px;font-size:11px;line-height:11px;width:44px;text-align:center;">0.3</div>
<div class="a t" style="left:719px;top:577.69px;font-size:11px;line-height:11px;width:44px;text-align:center;">0.2</div>
<div class="a t" style="left:899px;top:577.69px;font-size:11px;line-height:11px;width:44px;text-align:center;">1</div>
<div class="a t" style="left:948.5px;top:577.69px;font-size:11px;line-height:11px;letter-spacing:0.014px">ΣGkj + Ad + Ψ1•Qk1 + ΣΨ2i•Qki (6.11b)</div>
<div class="a" style="left:18px;top:576px;width:13px;height:13px;background:#f3f3f3;border:1px solid #5c5c5c;border-radius:3px;box-sizing:border-box"></div>
<div class="a t" style="left:36.5px;top:594.69px;font-size:11px;line-height:11px;">5</div>
<div class="a t" style="left:59.5px;top:594.69px;font-size:11px;line-height:11px;letter-spacing:-0.246px">Specific Earthquake(ULS) @3</div>
<div class="a t" style="left:224px;top:594.69px;font-size:11px;line-height:11px;width:44px;text-align:center;">1</div>
<div class="a t" style="left:269px;top:594.69px;font-size:11px;line-height:11px;width:44px;text-align:center;">0.3</div>
<div class="a t" style="left:314px;top:594.69px;font-size:11px;line-height:11px;width:44px;text-align:center;">0.3</div>
<div class="a t" style="left:359px;top:594.69px;font-size:11px;line-height:11px;width:44px;text-align:center;">0.3</div>
<div class="a t" style="left:404px;top:594.69px;font-size:11px;line-height:11px;width:44px;text-align:center;">0.6</div>
<div class="a t" style="left:449px;top:594.69px;font-size:11px;line-height:11px;width:44px;text-align:center;">0.6</div>
<div class="a t" style="left:494px;top:594.69px;font-size:11px;line-height:11px;width:44px;text-align:center;">0.8</div>
<div class="a t" style="left:539px;top:594.69px;font-size:11px;line-height:11px;width:44px;text-align:center;">0.6</div>
<div class="a t" style="left:584px;top:594.69px;font-size:11px;line-height:11px;width:44px;text-align:center;">0.3</div>
<div class="a t" style="left:719px;top:594.69px;font-size:11px;line-height:11px;width:44px;text-align:center;">0.2</div>
<div class="a t" style="left:854px;top:594.69px;font-size:11px;line-height:11px;width:44px;text-align:center;">1</div>
<div class="a t" style="left:948.5px;top:594.69px;font-size:11px;line-height:11px;letter-spacing:-0.020px">ΣGkj + Aed + ΣΨ2i•Qki (6.12b)</div>
<div class="a" style="left:18px;top:593px;width:13px;height:13px;background:#f3f3f3;border:1px solid #5c5c5c;border-radius:3px;box-sizing:border-box"></div>
<div class="a t" style="left:36.5px;top:611.69px;font-size:11px;line-height:11px;">6</div>
<div class="a t" style="left:59.5px;top:611.69px;font-size:11px;line-height:11px;letter-spacing:-0.224px">Characteristic(SLS) @4</div>
<div class="a t" style="left:224px;top:611.69px;font-size:11px;line-height:11px;width:44px;text-align:center;">1</div>
<div class="a t" style="left:269px;top:611.69px;font-size:11px;line-height:11px;width:44px;text-align:center;">1</div>
<div class="a t" style="left:314px;top:611.69px;font-size:11px;line-height:11px;width:44px;text-align:center;">0.7</div>
<div class="a t" style="left:359px;top:611.69px;font-size:11px;line-height:11px;width:44px;text-align:center;">0.7</div>
<div class="a t" style="left:404px;top:611.69px;font-size:11px;line-height:11px;width:44px;text-align:center;">0.7</div>
<div class="a t" style="left:449px;top:611.69px;font-size:11px;line-height:11px;width:44px;text-align:center;">0.7</div>
<div class="a t" style="left:494px;top:611.69px;font-size:11px;line-height:11px;width:44px;text-align:center;">1</div>
<div class="a t" style="left:539px;top:611.69px;font-size:11px;line-height:11px;width:44px;text-align:center;">0.7</div>
<div class="a t" style="left:584px;top:611.69px;font-size:11px;line-height:11px;width:44px;text-align:center;">0.7</div>
<div class="a t" style="left:629px;top:611.69px;font-size:11px;line-height:11px;width:44px;text-align:center;">0.7</div>
<div class="a t" style="left:674px;top:611.69px;font-size:11px;line-height:11px;width:44px;text-align:center;">0.6</div>
<div class="a t" style="left:719px;top:611.69px;font-size:11px;line-height:11px;width:44px;text-align:center;">0.7</div>
<div class="a t" style="left:764px;top:611.69px;font-size:11px;line-height:11px;width:44px;text-align:center;">0.5</div>
<div class="a t" style="left:809px;top:611.69px;font-size:11px;line-height:11px;width:44px;text-align:center;">0.6</div>
<div class="a t" style="left:948.5px;top:611.69px;font-size:11px;line-height:11px;letter-spacing:-0.063px">ΣGkj + Qk1 + ΣΨ0i•Qki (6.14b)</div>
<div class="a" style="left:18px;top:610px;width:13px;height:13px;background:#f3f3f3;border:1px solid #5c5c5c;border-radius:3px;box-sizing:border-box"></div>
<div class="a t" style="left:36.5px;top:628.69px;font-size:11px;line-height:11px;">7</div>
<div class="a t" style="left:59.5px;top:628.69px;font-size:11px;line-height:11px;letter-spacing:-0.466px">Usual(SLS) @5</div>
<div class="a t" style="left:224px;top:628.69px;font-size:11px;line-height:11px;width:44px;text-align:center;">1</div>
<div class="a t" style="left:269px;top:628.69px;font-size:11px;line-height:11px;width:44px;text-align:center;">0.5</div>
<div class="a t" style="left:314px;top:628.69px;font-size:11px;line-height:11px;width:44px;text-align:center;">0.3</div>
<div class="a t" style="left:359px;top:628.69px;font-size:11px;line-height:11px;width:44px;text-align:center;">0.3</div>
<div class="a t" style="left:404px;top:628.69px;font-size:11px;line-height:11px;width:44px;text-align:center;">0.6</div>
<div class="a t" style="left:449px;top:628.69px;font-size:11px;line-height:11px;width:44px;text-align:center;">0.6</div>
<div class="a t" style="left:494px;top:628.69px;font-size:11px;line-height:11px;width:44px;text-align:center;">0.8</div>
<div class="a t" style="left:539px;top:628.69px;font-size:11px;line-height:11px;width:44px;text-align:center;">0.6</div>
<div class="a t" style="left:584px;top:628.69px;font-size:11px;line-height:11px;width:44px;text-align:center;">0.3</div>
<div class="a t" style="left:719px;top:628.69px;font-size:11px;line-height:11px;width:44px;text-align:center;">0.2</div>
<div class="a t" style="left:948.5px;top:628.69px;font-size:11px;line-height:11px;letter-spacing:-0.069px">ΣGkj + Ψ1•Qk1 + ΣΨ2i•Qki (6.15b)</div>
<div class="a" style="left:18px;top:627px;width:13px;height:13px;background:#f3f3f3;border:1px solid #5c5c5c;border-radius:3px;box-sizing:border-box"></div>
<div class="a t" style="left:36.5px;top:645.69px;font-size:11px;line-height:11px;">8</div>
<div class="a t" style="left:59.5px;top:645.69px;font-size:11px;line-height:11px;letter-spacing:-0.262px">Quasi-parametric(SLS) @6</div>
<div class="a t" style="left:224px;top:645.69px;font-size:11px;line-height:11px;width:44px;text-align:center;">1</div>
<div class="a t" style="left:269px;top:645.69px;font-size:11px;line-height:11px;width:44px;text-align:center;">0.3</div>
<div class="a t" style="left:314px;top:645.69px;font-size:11px;line-height:11px;width:44px;text-align:center;">0.3</div>
<div class="a t" style="left:359px;top:645.69px;font-size:11px;line-height:11px;width:44px;text-align:center;">0.3</div>
<div class="a t" style="left:404px;top:645.69px;font-size:11px;line-height:11px;width:44px;text-align:center;">0.6</div>
<div class="a t" style="left:449px;top:645.69px;font-size:11px;line-height:11px;width:44px;text-align:center;">0.6</div>
<div class="a t" style="left:494px;top:645.69px;font-size:11px;line-height:11px;width:44px;text-align:center;">0.8</div>
<div class="a t" style="left:539px;top:645.69px;font-size:11px;line-height:11px;width:44px;text-align:center;">0.6</div>
<div class="a t" style="left:584px;top:645.69px;font-size:11px;line-height:11px;width:44px;text-align:center;">0.3</div>
<div class="a t" style="left:719px;top:645.69px;font-size:11px;line-height:11px;width:44px;text-align:center;">0.2</div>
<div class="a t" style="left:948.5px;top:645.69px;font-size:11px;line-height:11px;letter-spacing:-0.089px">ΣGkj + ΣΨ2i•Qki (6.16b)</div>
<div class="a" style="left:18px;top:644px;width:13px;height:13px;background:#f3f3f3;border:1px solid #5c5c5c;border-radius:3px;box-sizing:border-box"></div>
<div class="a t" style="left:36.5px;top:662.69px;font-size:11px;line-height:11px;">9</div>
<div class="a t" style="left:54px;top:662.69px;font-size:11px;line-height:11px;width:169px;text-align:center;letter-spacing:-0.141px">G+W @1</div>
<div class="a t" style="left:224px;top:662.69px;font-size:11px;line-height:11px;width:44px;text-align:center;">1</div>
<div class="a t" style="left:809px;top:662.69px;font-size:11px;line-height:11px;width:44px;text-align:center;">1</div>
<div class="a t" style="left:948.5px;top:662.69px;font-size:11px;line-height:11px;letter-spacing:-0.088px">ΣGkj + W</div>
<div class="a" style="left:18px;top:661px;width:13px;height:13px;background:#005fb8;border-radius:3px"></div>
<svg class="a" style="left:18px;top:661px" width="13" height="13"><path d="M3.2 6.8 L5.4 8.8 L9.8 4.2" stroke="#fff" stroke-width="1" fill="none"/></svg>
<div class="a t" style="left:36.5px;top:679.69px;font-size:11px;line-height:11px;">10</div>
<div class="a t" style="left:54px;top:679.69px;font-size:11px;line-height:11px;width:169px;text-align:center;letter-spacing:-0.297px">G+Sn @1</div>
<div class="a t" style="left:224px;top:679.69px;font-size:11px;line-height:11px;width:44px;text-align:center;">1</div>
<div class="a t" style="left:719px;top:679.69px;font-size:11px;line-height:11px;width:44px;text-align:center;">1</div>
<div class="a t" style="left:764px;top:679.69px;font-size:11px;line-height:11px;width:44px;text-align:center;">1</div>
<div class="a t" style="left:948.5px;top:679.69px;font-size:11px;line-height:11px;letter-spacing:-0.200px">ΣGkj + Sn</div>
<div class="a" style="left:18px;top:678px;width:13px;height:13px;background:#005fb8;border-radius:3px"></div>
<svg class="a" style="left:18px;top:678px" width="13" height="13"><path d="M3.2 6.8 L5.4 8.8 L9.8 4.2" stroke="#fff" stroke-width="1" fill="none"/></svg>
<div class="a" style="left:14px;top:539px;width:1168px;height:1px;background:#ececec;"></div>
<div class="a" style="left:14px;top:556px;width:1168px;height:1px;background:#ececec;"></div>
<div class="a" style="left:14px;top:573px;width:1168px;height:1px;background:#ececec;"></div>
<div class="a" style="left:14px;top:590px;width:1168px;height:1px;background:#ececec;"></div>
<div class="a" style="left:14px;top:607px;width:1168px;height:1px;background:#ececec;"></div>
<div class="a" style="left:14px;top:624px;width:1168px;height:1px;background:#ececec;"></div>
<div class="a" style="left:14px;top:641px;width:1168px;height:1px;background:#ececec;"></div>
<div class="a" style="left:14px;top:658px;width:1168px;height:1px;background:#ececec;"></div>
<div class="a" style="left:14px;top:675px;width:1168px;height:1px;background:#ececec;"></div>
<div class="a" style="left:14px;top:692px;width:1168px;height:1px;background:#ececec;"></div>
<div class="a" style="left:14px;top:709px;width:1168px;height:1px;background:#ececec;"></div>
<div class="a" style="left:14px;top:726px;width:1168px;height:1px;background:#ececec;"></div>
<div class="a" style="left:54px;top:523px;width:1px;height:210px;background:#ececec;"></div>
<div class="a" style="left:224px;top:523px;width:1px;height:210px;background:#ececec;"></div>
<div class="a" style="left:269px;top:523px;width:1px;height:210px;background:#ececec;"></div>
<div class="a" style="left:314px;top:523px;width:1px;height:210px;background:#ececec;"></div>
<div class="a" style="left:359px;top:523px;width:1px;height:210px;background:#ececec;"></div>
<div class="a" style="left:404px;top:523px;width:1px;height:210px;background:#ececec;"></div>
<div class="a" style="left:449px;top:523px;width:1px;height:210px;background:#ececec;"></div>
<div class="a" style="left:494px;top:523px;width:1px;height:210px;background:#ececec;"></div>
<div class="a" style="left:539px;top:523px;width:1px;height:210px;background:#ececec;"></div>
<div class="a" style="left:584px;top:523px;width:1px;height:210px;background:#ececec;"></div>
<div class="a" style="left:629px;top:523px;width:1px;height:210px;background:#ececec;"></div>
<div class="a" style="left:674px;top:523px;width:1px;height:210px;background:#ececec;"></div>
<div class="a" style="left:719px;top:523px;width:1px;height:210px;background:#ececec;"></div>
<div class="a" style="left:764px;top:523px;width:1px;height:210px;background:#ececec;"></div>
<div class="a" style="left:809px;top:523px;width:1px;height:210px;background:#ececec;"></div>
<div class="a" style="left:854px;top:523px;width:1px;height:210px;background:#ececec;"></div>
<div class="a" style="left:899px;top:523px;width:1px;height:210px;background:#ececec;"></div>
<div class="a" style="left:944px;top:523px;width:1px;height:210px;background:#ececec;"></div>
<div class="a" style="left:54px;top:660px;width:170px;height:31px;background:#ff8080;"></div>
<div class="a" style="left:54px;top:675px;width:170px;height:1px;background:#f57878;"></div>
<div class="a t" style="left:59.5px;top:662.69px;font-size:11px;line-height:11px;color:#800000;letter-spacing:-0.141px">G+W @1</div>
<div class="a t" style="left:59.5px;top:679.69px;font-size:11px;line-height:11px;color:#800000;letter-spacing:-0.297px">G+Sn @1</div>
<div class="a" style="left:13px;top:733px;width:1170px;height:17px;background:#f0f0f0;"></div>
<div class="a" style="left:31px;top:740px;width:967px;height:2px;background:#7a7a7a;border-radius:1px"></div>
<div class="a" style="left:13px;top:757px;width:73px;height:24px;background:#fdfdfd;border:1px solid #d0d0d0;border-radius:4px;box-sizing:border-box"></div>
<div class="a t" style="left:13px;top:763.69px;font-size:11px;line-height:11px;width:73px;text-align:center;">OK</div>
<div class="a" style="left:94px;top:757px;width:73px;height:24px;background:#fdfdfd;border:1px solid #d0d0d0;border-radius:4px;box-sizing:border-box"></div>
<div class="a t" style="left:94px;top:763.69px;font-size:11px;line-height:11px;width:73px;text-align:center;">Cancel</div>
<div class="a" style="left:355px;top:757px;width:30px;height:24px;background:#f0f0f0;border-top:1px solid #fff;border-left:1px solid #fff;border-right:1px solid #a0a0a0;border-bottom:1px solid #a0a0a0;box-sizing:border-box"></div>
<svg class="a" style="left:355px;top:757px" width="30" height="24"><rect x="6" y="7" width="11" height="3" fill="#8e8a9a"/><rect x="10" y="3" width="3" height="11" fill="#8e8a9a"/><rect x="14" y="14" width="11" height="3" fill="#0a5fff"/><rect x="18" y="10" width="3" height="11" fill="#0a5fff"/></svg>
<div class="a" style="left:394px;top:757px;width:30px;height:24px;background:#f0f0f0;border-top:1px solid #fff;border-left:1px solid #fff;border-right:1px solid #a0a0a0;border-bottom:1px solid #a0a0a0;box-sizing:border-box"></div>
<svg class="a" style="left:394px;top:757px" width="30" height="24" viewBox="0 0 30 24"><path d="M6.2 4.2 Q8 3.4 10 4.4 Q13 6.5 17.6 12.2 L23.2 20.6 L22.6 21 L16.4 13.6 Q12 9.8 6.6 6.6 Q5.2 5.2 6.2 4.2 Z" fill="#0a6cff"/><path d="M23.8 3.6 L24.3 4 L18.4 12.6 Q15.8 15.8 11 18.4 Q8 20 6.6 20 Q5.4 19.6 5.8 18.6 Q6.2 17.8 7.4 17.4 Q12.5 15.6 16.6 11.8 Z" fill="#0a6cff"/></svg>
<div class="a" style="left:434px;top:757px;width:220px;height:24px;background:#fdfdfd;border:1px solid #d0d0d0;border-radius:4px;box-sizing:border-box"></div>
<div class="a t" style="left:434px;top:763.69px;font-size:11px;line-height:11px;width:220px;text-align:center;letter-spacing:-0.017px">Set standard rules</div>
<div class="a" style="left:661px;top:757px;width:220px;height:24px;background:#fdfdfd;border:1px solid #d0d0d0;border-radius:4px;box-sizing:border-box"></div>
<div class="a t" style="left:661px;top:763.69px;font-size:11px;line-height:11px;width:220px;text-align:center;letter-spacing:-0.060px">Compute coefficients</div>
</body></html>
